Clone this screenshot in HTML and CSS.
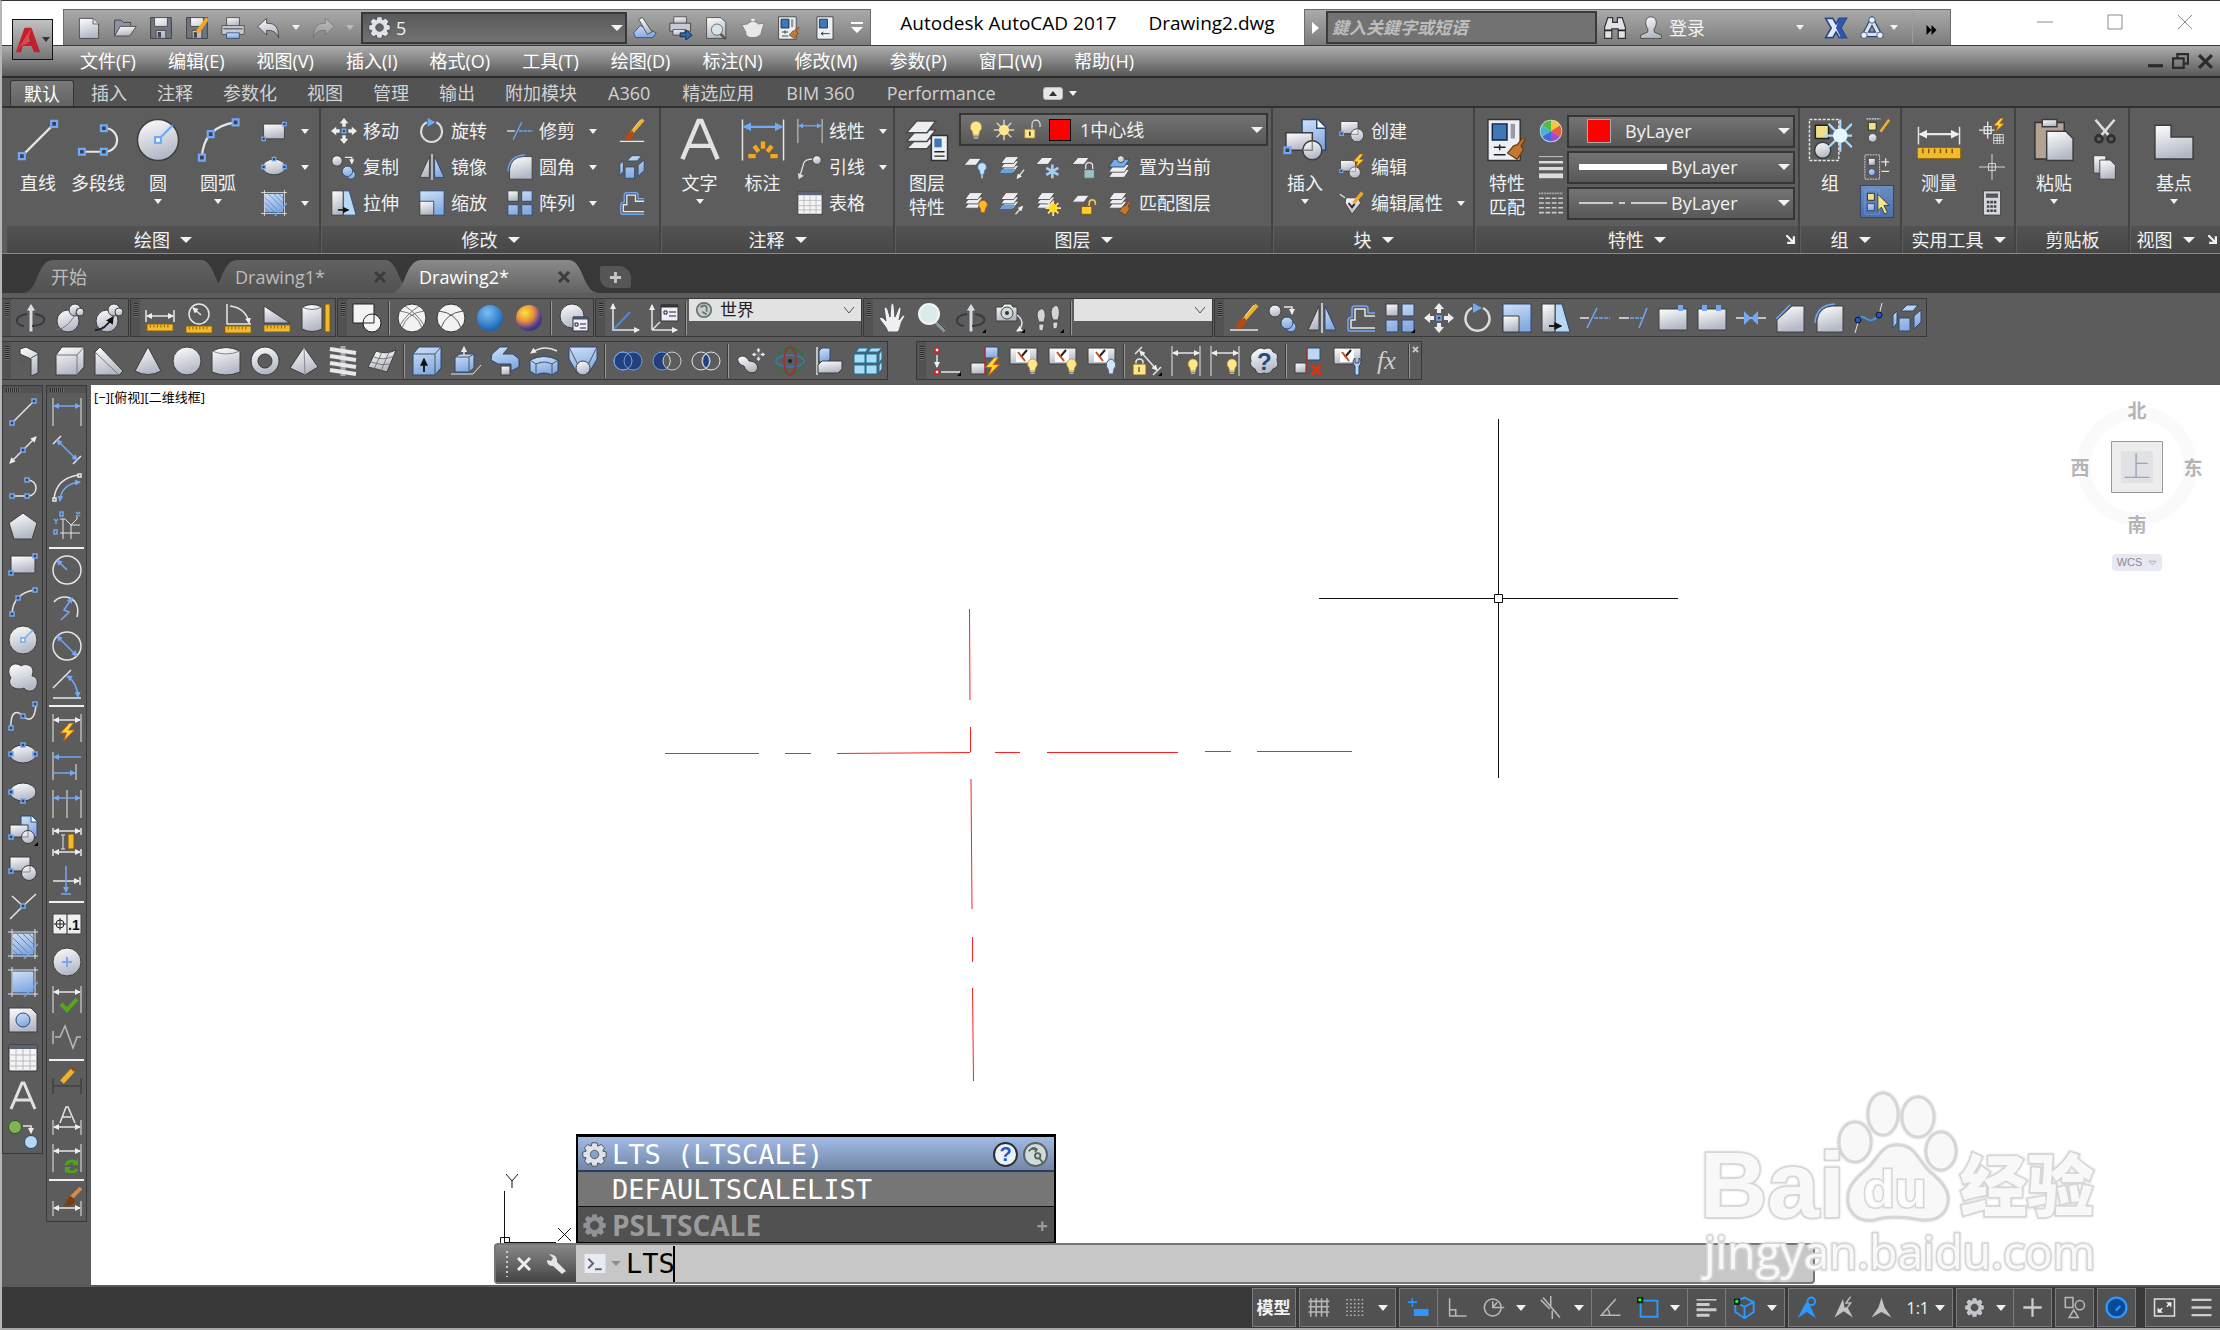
FILE: index.html
```html
<!DOCTYPE html>
<html lang="zh-CN">
<head>
  <title>Autodesk AutoCAD 2017 - Drawing2.dwg</title>
  <meta charset="UTF-8" />
  <meta name="viewport" content="width=device-width" />
  <link rel="stylesheet" href="styles.css">
</head>
<body>
  <svg class="sprite" width="0" height="0" aria-hidden="true">
    <defs>
      <linearGradient id="gw" x1="0" y1="0" x2="0.3" y2="1"><stop offset="0" stop-color="#fff"/><stop offset="1" stop-color="#b4b9c6"/></linearGradient>
      <linearGradient id="gb" x1="0" y1="0" x2="0.3" y2="1"><stop offset="0" stop-color="#cfe2f9"/><stop offset="1" stop-color="#86abe0"/></linearGradient>
      <radialGradient id="gblue" cx="0.4" cy="0.3" r="0.7"><stop offset="0" stop-color="#7cc0f5"/><stop offset="1" stop-color="#1764b4"/></radialGradient>
      <radialGradient id="gwarm" cx="0.35" cy="0.3" r="0.75"><stop offset="0" stop-color="#ffe23a"/><stop offset="0.45" stop-color="#e8913c"/><stop offset="0.8" stop-color="#5a3d93"/><stop offset="1" stop-color="#33307c"/></radialGradient>
      <marker id="aw" viewBox="0 0 6 6" refX="5" refY="3" markerWidth="4" markerHeight="4" orient="auto-start-reverse"><path d="M0 0L6 3L0 6Z" fill="#eee"/></marker>
      <marker id="ab" viewBox="0 0 6 6" refX="5" refY="3" markerWidth="4" markerHeight="4" orient="auto-start-reverse"><path d="M0 0L6 3L0 6Z" fill="#72a8f5"/></marker>
      <marker id="ak" viewBox="0 0 6 6" refX="5" refY="3" markerWidth="4" markerHeight="4" orient="auto-start-reverse"><path d="M0 0L6 3L0 6Z" fill="#111"/></marker>
    </defs>

    <!-- shared parts -->
    <symbol id="bulb" viewBox="0 0 30 30"><path d="M15 3a8 8 0 0 1 5 14l-1 5h-8l-1-5a8 8 0 0 1 5-14z" fill="#ffe88c" stroke="#a98a2c"/><path d="M11 23h8M12 26h6" stroke="#bbb" stroke-width="2"/></symbol>
    <symbol id="sun" viewBox="0 0 30 30"><path d="M15 1v28M1 15h28M5 5l20 20M25 5L5 25" stroke="#d8d2b8" stroke-width="2"/><circle cx="15" cy="15" r="7" fill="#ffe68a"/></symbol>
    <symbol id="lock-open" viewBox="0 0 30 30"><path d="M15 14V7a5 5 0 0 1 11 0v4" class="w"/><path d="M5 14h14v12H5z" fill="#ffe68a" stroke="#927a2a"/><path d="M12 17v6" class="k"/></symbol>
    <symbol id="ruler" viewBox="0 0 30 8"><path d="M0 0h30v8H0z" fill="#f3bb2c" stroke="#7c5508"/><path d="M4 1v3M8 1v3M12 1v3M16 1v3M20 1v3M24 1v3" stroke="#7c5508"/></symbol>
    <symbol id="bolt" viewBox="0 0 14 18"><path d="M9 0L0 10h6l-3 8 11-11H8l5-7z" fill="#ffd23a" stroke="#c35f0b"/></symbol>
    <symbol id="sheets" viewBox="0 0 24 24"><path d="M8 13h15l-6 8H2z" class="lay"/><path d="M8 8h15l-6 8H2z" class="lay"/><path d="M8 3h15l-6 8H2z" class="lay"/></symbol>
    <symbol id="brushlet" viewBox="0 0 16 18"><path d="M15 0l-4 6 2 3-5 8-8-5 5-6 3-1 4-5z" fill="#c27832" stroke="#6b3d12"/></symbol>
    <symbol id="cons" viewBox="0 0 30 30"><rect x="1" y="2" width="27" height="16" rx="1" class="fw"/><path d="M7 4h14v12H7z" fill="#fff"/><path d="M18 4l-6 7" class="k"/><path d="M9 6l7 9" stroke="#c84a1b" stroke-width="2"/></symbol>

    <!-- draw -->
    <symbol id="line" viewBox="0 0 30 30"><path d="M4 26L26 4" class="w"/><path d="M2 24h4v4H2zM24 2h4v4h-4z" class="n"/></symbol>
    <symbol id="xline" viewBox="0 0 30 30"><path d="M2 28L28 2" class="w aa"/><path d="M13 13h4v4h-4z" class="n"/></symbol>
    <symbol id="pline" viewBox="0 0 30 30"><path d="M4 23h16a8 8 0 0 0 0-16h-1" class="w"/><path d="M2 21h4v4H2zM17 21h4v4h-4zM17 5h4v4h-4z" class="n"/></symbol>
    <symbol id="polygon" viewBox="0 0 30 30"><path d="M15 2l14 10-5 16H6L1 12z" class="fw"/></symbol>
    <symbol id="rect" viewBox="0 0 30 30"><path d="M3 7h24v17H3z" class="fw"/><path d="M1 22h4v4H1zM25 5h4v4h-4z" class="n"/></symbol>
    <symbol id="arc" viewBox="0 0 30 30"><path d="M4 27Q5 6 27 3" class="w"/><path d="M2 25h4v4H2zM8 9h4v4H8zM25 1h4v4h-4z" class="n"/></symbol>
    <symbol id="circle" viewBox="0 0 30 30"><circle cx="15" cy="15" r="14" class="fw"/><path d="M15 15L25 5" class="b"/><path d="M13 13h4v4h-4z" class="n nw"/></symbol>
    <symbol id="cloud" viewBox="0 0 30 30"><path d="M13 3c4-3 12-1 12 5 0 3-1 4-1 5 5 0 6 6 5 9-2 8-11 7-13 3-4 2-12 1-14-4-1-3 0-5 1-6C-1 9 1 4 4 2c3-2 7-1 9 1z" class="fw"/></symbol>
    <symbol id="spline" viewBox="0 0 30 30"><path d="M3 27C2 8 10 10 15 15s12 6 13-12" class="w"/><path d="M1 25h4v4H1zM13 13h4v4h-4zM25 1h4v4h-4z" class="n"/></symbol>
    <symbol id="ellipse" viewBox="0 0 30 30"><ellipse cx="15" cy="15" rx="13" ry="9" class="fw"/><path d="M1 13h4v4H1zM25 13h4v4h-4zM13 4h4v4h-4z" class="n"/></symbol>
    <symbol id="ellarc" viewBox="0 0 30 30"><ellipse cx="15" cy="15" rx="13" ry="9" class="fw"/><path d="M1 13h4v4H1zM13 22h4v4h-4z" class="n"/></symbol>
    <symbol id="insert" viewBox="0 0 30 30"><path d="M13 1h11l5 5v16H13z" class="fb"/><path d="M23 1v6h6" fill="#fff" stroke="#2c4770"/><path d="M2 10h18v12H2z" class="fw"/><circle cx="20" cy="22" r="6.5" class="fw"/><path d="M20 16v6h-6" fill="none" stroke="#888"/><path d="M1 20h4v4H1z" class="n"/></symbol>
    <symbol id="block" viewBox="0 0 30 30"><path d="M2 4h20v14H2z" class="fw"/><circle cx="21" cy="20" r="7.5" class="fw"/><path d="M22 13v6h-8" fill="none" stroke="#888"/><path d="M1 16h4v4H1z" class="n"/></symbol>
    <symbol id="point" viewBox="0 0 30 30"><path d="M4 5l11 10L28 3M15 15L2 28" class="w"/><path d="M13 13h4v4h-4z" class="n"/></symbol>
    <symbol id="hatch" viewBox="0 0 30 30"><path d="M4 4h22v22H4z" class="fb"/><path d="M4 8l18 18M4 14l12 12M4 20l6 6M8 4l18 18M14 4l12 12M20 4l6 6" stroke="#5f86c4"/><path d="M0 3h30M0 27h30M4 0v30M27 0v30" class="w thin"/><path d="M16 30L30 15" class="b"/></symbol>
    <symbol id="gradient" viewBox="0 0 30 30"><path d="M4 4h22v22H4z" class="fb"/><path d="M0 3h30M0 27h30M4 0v30M27 0v30" class="w thin"/><path d="M16 30L30 15" class="b"/></symbol>
    <symbol id="region" viewBox="0 0 30 30"><path d="M1 3h22l6 6v18H1z" class="fw"/><circle cx="15" cy="15" r="7" class="fb"/></symbol>
    <symbol id="table" viewBox="0 0 30 30"><path d="M1 2h28v26H1z" fill="#f4f4f4" stroke="#333"/><path d="M1 2h28v4H1z" fill="#5c6370"/><path d="M8 6v22M15 6v22M22 6v22M1 12h28M1 18h28M1 23h28" stroke="#b5b8c0"/></symbol>
    <symbol id="text" viewBox="0 0 30 30"><path d="M3 28L14 2h2l11 26M7 19h16" fill="none" stroke="#e2e2e2" stroke-width="3"/></symbol>
    <symbol id="addsel" viewBox="0 0 30 30"><circle cx="7" cy="8" r="6.5" fill="#7fb356" stroke="#2e5a17"/><path d="M15 7h8v7" class="w ae"/><circle cx="23" cy="23" r="6.5" fill="#b5d8f5" stroke="#2c4770"/></symbol>

    <!-- dimensions -->
    <symbol id="dimlin" viewBox="0 0 30 30"><path d="M1 1v28M29 1v28" class="w thin"/><path d="M2 9h26" class="b ba"/></symbol>
    <symbol id="dimali" viewBox="0 0 30 30"><path d="M1 9L9 1M21 29l8-8" class="w"/><path d="M5 5l20 20" class="b ba"/></symbol>
    <symbol id="dimarc" viewBox="0 0 30 30"><path d="M2 26Q4 5 27 2" class="w"/><path d="M8 28Q9 11 28 9" class="b ba"/><path d="M1 25h3v3H1zM26 1h3v3h-3z" class="w"/></symbol>
    <symbol id="dimord" viewBox="0 0 30 30"><path d="M8 8h5l6 6h9M11 8v20M8 22h20M19 14v14M19 14l6-6V5" class="w thin"/><path d="M8 1h3v4H8zM24 1l4 4M28 1l-4 4M2 8l2 2 2-2M4 10v3M2 19h3v4H2z" class="b"/></symbol>
    <symbol id="dimrad" viewBox="0 0 30 30"><circle cx="15" cy="15" r="14" class="w"/><path d="M15 15L5 5" class="b be"/></symbol>
    <symbol id="dimjog" viewBox="0 0 30 30"><path d="M2 9C10-1 30 4 25 24" class="w"/><path d="M9 27l8-8-5-2 8-12" class="b be"/></symbol>
    <symbol id="dimdia" viewBox="0 0 30 30"><circle cx="15" cy="15" r="14" class="w"/><path d="M5 5l20 20" class="b ba"/></symbol>
    <symbol id="dimang" viewBox="0 0 30 30"><path d="M1 19L19 1M1 29h28" class="w"/><path d="M15 7q10 6 11 21" class="b ba"/></symbol>
    <symbol id="qdim" viewBox="0 0 30 30"><path d="M1 1v28M29 1v28" class="w thin"/><path d="M2 7h26" class="w aa"/><use href="#bolt" x="8" y="10" width="15" height="18"/></symbol>
    <symbol id="dimbase" viewBox="0 0 30 30"><path d="M1 1v28M24 13v16" class="w thin"/><path d="M2 6h27M2 22h21" class="b ba"/></symbol>
    <symbol id="dimcont" viewBox="0 0 30 30"><path d="M1 1v28M15 1v28M29 1v28" class="w thin"/><path d="M2 9h12M16 9h12" class="b ba"/></symbol>
    <symbol id="dimspace" viewBox="0 0 30 30"><path d="M1 1v7M29 1v7M1 22v7M29 22v7" class="w"/><path d="M2 4h26" class="w aa"/><path d="M2 25h26" class="w aa"/><path d="M11 8v14M9 8h4M9 22h4" class="w thin"/><path d="M16 7h6v15h-6z" fill="#f3bb2c" stroke="#7c5508"/></symbol>
    <symbol id="dimbreak" viewBox="0 0 30 30"><path d="M1 16h26" class="w ae"/><path d="M28 12v8" class="w"/><path d="M14 1v26" class="b be"/><path d="M9 29h10" class="b"/></symbol>
    <symbol id="center" viewBox="0 0 30 30"><circle cx="15" cy="15" r="14" class="fw"/><path d="M15 10v10M10 15h10" stroke="#72a8f5" stroke-width="2"/></symbol>
    <symbol id="inspect" viewBox="0 0 30 30"><path d="M1 1v27M29 1v27" class="w thin"/><path d="M2 7h26" class="w aa"/><path d="M9 19l6 6L25 14" fill="none" stroke="#55a814" stroke-width="4"/></symbol>
    <symbol id="jogline" viewBox="0 0 30 30"><path d="M1 8v13M3 14h5L13 3l8 22 4-11h4" fill="none" stroke="#b8b8b8" stroke-width="1.5"/></symbol>
    <symbol id="dimedit" viewBox="0 0 30 30"><path d="M1 11v16M29 11v16M2 19h26" fill="none" stroke="#333"/><path d="M10 15L21 3" stroke="#f1b12a" stroke-width="5"/><path d="M20 3l3-3" stroke="#8b4a18" stroke-width="5"/></symbol>
    <symbol id="dimtedit" viewBox="0 0 30 30"><path d="M8 18L14 2h2l7 16M11 12h8" class="w"/><path d="M1 15v15M29 15v15" class="w thin"/><path d="M2 22h26" class="w aa"/></symbol>
    <symbol id="dimupd" viewBox="0 0 30 30"><path d="M1 1v28M29 1v28" class="w thin"/><path d="M2 8h26" class="w aa"/><path d="M14 22a6 6 0 0 1 10-2M25 26a6 6 0 0 1-10 1" fill="none" stroke="#4fa61a" stroke-width="3"/><path d="M26 16v6h-6zM13 30v-6h6z" fill="#4fa61a"/></symbol>
    <symbol id="dimstyle" viewBox="0 0 30 30"><path d="M1 14v15M29 14v15" class="w thin"/><path d="M2 21h26" class="w aa"/><path d="M29 1L19 11" stroke="#d08a4a" stroke-width="4"/><path d="M19 9l4 4c-1 6-6 7-12 6 4-2 3-8 8-10z" fill="#7a3d12"/></symbol>

    <!-- modify -->
    <symbol id="erase" viewBox="0 0 30 30"><path d="M1 27h28" class="w"/><path d="M28 2L14 18" stroke="#f1b12a" stroke-width="4"/><path d="M25 2l-9 11" stroke="#fff2b0"/><path d="M16 15c4 6-2 11-10 11 3-3 2-10 10-11z" fill="#b54a12"/></symbol>
    <symbol id="copy" viewBox="0 0 30 30"><circle cx="7" cy="8" r="6" class="fw"/><path d="M16 4h8v7" class="w ae"/><circle cx="23" cy="24" r="5" class="fb"/><circle cx="19" cy="20" r="6" class="fb"/></symbol>
    <symbol id="mirror" viewBox="0 0 30 30"><path d="M12 3v24H1z" class="fw"/><path d="M18 3v24h11z" class="fb"/><path d="M15 0v30" class="w"/></symbol>
    <symbol id="offset" viewBox="0 0 30 30"><path d="M29 28H4q-2 0-2-3V17q0-2 3-3h1V6q0-3 3-3h10q3 0 3 3v4h7" class="b"/><path d="M29 25H5v-8h4V6h10v7h10" class="w"/></symbol>
    <symbol id="array" viewBox="0 0 30 30"><path d="M1 1h12v12H1z" class="fw"/><path d="M17 1h12v12H17zM1 17h12v12H1zM17 17h12v12H17z" class="fb"/></symbol>
    <symbol id="move" viewBox="0 0 30 30"><path d="M15 0l5 6h-3v4h-4V6h-3zM15 30l5-6h-3v-4h-4v4h-3zM0 15l6-5v3h4v4H6v3zM30 15l-6-5v3h-4v4h4v3z" fill="#eee"/><path d="M13 13h4v4h-4z" class="n"/></symbol>
    <symbol id="rotate" viewBox="0 0 30 30"><path d="M20 5a12 12 0 1 1-11 0" fill="none" stroke="#dcdcdc" stroke-width="2.5"/><path d="M10 0l9 5-9 5z" fill="#72a8f5"/></symbol>
    <symbol id="scale" viewBox="0 0 30 30"><path d="M1 1h28v28H1z" class="fb"/><path d="M1 13h16v16H1z" class="fw"/></symbol>
    <symbol id="stretch" viewBox="0 0 30 30"><path d="M14 1h7l8 28H14z" fill="#b8d8f4" stroke="#2c4770"/><path d="M1 1h13v28H1z" class="fw"/><path d="M8 23h12" class="k ke"/></symbol>
    <symbol id="trim" viewBox="0 0 30 30"><path d="M0 15h9" class="w"/><path d="M7 25L17 5" class="b"/><path d="M14 15h16" class="b dash"/></symbol>
    <symbol id="extend" viewBox="0 0 30 30"><path d="M0 15h10" class="w"/><path d="M20 25L28 5" class="b"/><path d="M11 15h12" class="b dash"/></symbol>
    <symbol id="breakpt" viewBox="0 0 30 30"><path d="M1 6h28v21H1z" class="fw"/><path d="M20 2h5v6h-5z" fill="#72a8f5"/></symbol>
    <symbol id="break" viewBox="0 0 30 30"><path d="M1 6h28v21H1z" class="fw"/><path d="M5 2h5v6H5zM19 2h5v6h-5z" fill="#72a8f5"/></symbol>
    <symbol id="join" viewBox="0 0 30 30"><path d="M0 15h30" class="w"/><path d="M8 8l7 7 7-7v14l-7-7-7 7z" fill="#72a8f5"/></symbol>
    <symbol id="chamfer" viewBox="0 0 30 30"><path d="M2 29V17L17 3h12v26z" class="fw"/><path d="M1 16L15 2" class="b"/></symbol>
    <symbol id="fillet" viewBox="0 0 30 30"><path d="M3 29V17Q5 4 18 3h11v26z" class="fw"/><path d="M1 20Q2 2 21 1" class="b"/></symbol>
    <symbol id="blend" viewBox="0 0 30 30"><path d="M2 30l4-14M26 12l3-12" class="w thin"/><path d="M5 17c6-8 9 3 14 0 4-1 5-3 7-5" fill="none" stroke="#4496d8" stroke-width="2"/><circle cx="5" cy="17" r="3" fill="#1f55c4" stroke="#112"/><circle cx="26" cy="12" r="3" fill="#1f55c4" stroke="#112"/></symbol>
    <symbol id="explode" viewBox="0 0 30 30"><path d="M7 15h11v13H7zM9 8l6-6h11l-5 6zM22 13l7-6v12l-7 7zM1 12l4-4v12l-4 5z" class="fb"/></symbol>

    <!-- inquiry and visual styles -->
    <symbol id="orbit" viewBox="0 0 30 30"><path d="M15 0l5 8h-3v21h-4V8h-3z" fill="#d7dae2" stroke="#555"/><path d="M19 11c14 2 12 11-3 12M11 11c-14 2-12 11-3 12" fill="none" stroke="#343a44" stroke-width="2"/></symbol>
    <symbol id="blob" viewBox="0 0 30 30"><circle cx="13" cy="18" r="11" class="fw"/><circle cx="20" cy="7" r="6" class="fw"/><circle cx="25" cy="9" r="4" class="fw"/><path d="M1 27Q14 26 23 6" fill="none" stroke="#777"/></symbol>
    <symbol id="blob2" viewBox="0 0 30 30"><circle cx="13" cy="18" r="11" class="fw"/><circle cx="20" cy="7" r="6" class="fw"/><circle cx="25" cy="9" r="4" class="fw"/><path d="M1 27Q10 28 19 14" class="k ke"/></symbol>
    <symbol id="distance" viewBox="0 0 30 30"><path d="M1 7v12M29 7v12" class="w"/><path d="M2 13h26" class="w aa"/><use href="#ruler" y="21" width="30" height="7"/></symbol>
    <symbol id="radius" viewBox="0 0 30 30"><circle cx="15" cy="11" r="10" class="w"/><path d="M17 12L9 5" class="w ae"/><use href="#ruler" y="23" width="30" height="7"/></symbol>
    <symbol id="angle" viewBox="0 0 30 30"><path d="M4 1v20h24M7 3q16 2 19 17" class="w ae"/><use href="#ruler" y="23" width="30" height="7"/></symbol>
    <symbol id="area" viewBox="0 0 30 30"><path d="M2 3v17h26z" class="fw"/><use href="#ruler" y="22" width="30" height="7"/></symbol>
    <symbol id="volume" viewBox="0 0 30 30"><path d="M1 4q10-5 20 0v22q-10 5-20 0z" class="fw"/><path d="M1 4q10 5 20 0" fill="none" stroke="#777"/><path d="M24 1h5v28h-5z" fill="#f3bb2c" stroke="#7c5508"/></symbol>
    <symbol id="vs2d" viewBox="0 0 30 30"><path d="M1 1h21v19H1z" fill="#f4f4f4" stroke="#222"/><circle cx="20" cy="20" r="9" fill="#f4f4f4" stroke="#222"/><path d="M22 12v8H11" fill="none" stroke="#222"/></symbol>
    <symbol id="vswire" viewBox="0 0 30 30"><circle cx="15" cy="15" r="14" fill="#f2f2f2" stroke="#333"/><path d="M3 8Q20 10 25 25M27 8Q10 10 5 25M8 3q12 8 19 19M22 3Q10 11 3 22" fill="none" stroke="#777"/></symbol>
    <symbol id="vshide" viewBox="0 0 30 30"><circle cx="15" cy="15" r="14" fill="#f2f2f2" stroke="#333"/><path d="M3 8Q20 10 25 25M27 8Q10 10 5 25" fill="none" stroke="#555"/></symbol>
    <symbol id="vsreal" viewBox="0 0 30 30"><circle cx="15" cy="15" r="13" fill="url(#gblue)"/></symbol>
    <symbol id="vsconc" viewBox="0 0 30 30"><circle cx="15" cy="15" r="13" fill="url(#gwarm)"/></symbol>
    <symbol id="vsman" viewBox="0 0 30 30"><circle cx="13" cy="13" r="12" class="fw"/><path d="M14 14h15v14H14z" fill="#eef" stroke="#333"/><path d="M14 15h15" stroke="#456" stroke-width="3"/><path d="M16 20h3v3h-3zM21 21h6M21 25h6" class="k thin"/></symbol>
    <symbol id="ucs" viewBox="0 0 30 30"><path d="M3 1v26h26" class="w aa"/><path d="M4 26L20 9" stroke="#4f8ad8" stroke-width="2"/></symbol>
    <symbol id="ucsman" viewBox="0 0 30 30"><path d="M3 27V2" class="w ae"/><path d="M3 27h25" class="w ae"/><path d="M3 27l8-8" class="w"/><path d="M12 2h17v16H12z" fill="#eef" stroke="#333"/><path d="M12 3h17" stroke="#333" stroke-width="3"/><path d="M15 8h3v3h-3zM20 9h7M20 13h7" class="k thin"/></symbol>
    <symbol id="pan" viewBox="0 0 30 30"><path d="M10 29c-2-6-6-9-9-14 3-2 5 1 7 3L6 5c2-2 3 0 4 2l2 7 1-13c2-1 3 0 3 2l1 11 4-10c2 0 2 1 2 3l-2 10 4-5c2 0 2 1 1 3-4 5-3 9-6 14z" fill="#eef0f4" stroke="#555"/></symbol>
    <symbol id="zoom" viewBox="0 0 30 30"><path d="M18 18l10 10" stroke="#8d939e" stroke-width="4"/><path d="M20 18l9 9" stroke="#333"/><circle cx="12" cy="11" r="10" fill="#dcebea" stroke="#f4f4f4" stroke-width="2"/></symbol>
    <symbol id="camera" viewBox="0 0 30 30"><path d="M1 4h6l2-3h7l2 3h4v14H1z" class="fw"/><circle cx="12" cy="10" r="6" fill="#cfd9d8" stroke="#444"/><circle cx="12" cy="10" r="2" fill="#333"/><path d="M22 12c8 6 5 13 0 16" class="w ae"/></symbol>
    <symbol id="walk" viewBox="0 0 30 30"><path d="M5 7c5-4 7 3 6 8l-1 4H5C3 14 2 10 5 7zM5 21h5q0 7-3 7t-2-7zM19 4c6-5 7 4 6 9l-1 4h-5c-2-5-3-9 0-13zM19 19h5q0 7-3 7t-2-7z" fill="#d5d5d5" stroke="#4a4a4a"/></symbol>

    <!-- solids -->
    <symbol id="polysolid" viewBox="0 0 30 30"><path d="M4 3l6-2 12 6v20l-7 3V13L4 8z" class="fw"/><path d="M15 12l7-4M4 8v8l4 3V10" fill="none" stroke="#555"/></symbol>
    <symbol id="box" viewBox="0 0 30 30"><path d="M1 9l6-8h22v20l-7 8H1z" class="fw"/><path d="M1 9h21v20M22 9l7-8" fill="none" stroke="#777"/></symbol>
    <symbol id="wedge" viewBox="0 0 30 30"><path d="M1 29V6l5-5 23 24-4 4z" class="fw"/><path d="M1 6l24 23" fill="none" stroke="#777"/></symbol>
    <symbol id="cone" viewBox="0 0 30 30"><path d="M15 1l13 24q-13 7-26 0z" class="fw"/></symbol>
    <symbol id="sphere" viewBox="0 0 30 30"><circle cx="15" cy="15" r="14" class="fw"/></symbol>
    <symbol id="cylinder" viewBox="0 0 30 30"><path d="M1 5q14-7 28 0v21q-14 6-28 0z" class="fw"/><path d="M1 5q14 6 28 0" fill="none" stroke="#888"/></symbol>
    <symbol id="torus" viewBox="0 0 30 30"><path d="M15 1a14 14 0 1 0 .1 0zM15 8a7 7 0 1 1-.1 0z" class="fw" fill-rule="evenodd"/></symbol>
    <symbol id="pyramid" viewBox="0 0 30 30"><path d="M15 1l14 20-13 8L1 22z" class="fw"/><path d="M15 1l1 28" stroke="#888"/></symbol>
    <symbol id="helix" viewBox="0 0 30 30"><path d="M15 0v30" stroke="#aaa" stroke-width="5"/><path d="M2 3l26 4M2 10l26 4M2 17l26 4M2 24l26 4" stroke="#e8e8ee" stroke-width="4"/></symbol>
    <symbol id="mesh" viewBox="0 0 30 30"><path d="M9 5q10 4 20-1L20 26Q10 23 1 21z" class="fw"/><path d="M7 11q9 4 20-1M4 16q10 4 20 2M15 6L7 23M22 6l-8 19" fill="none" stroke="#777"/></symbol>
    <symbol id="presspull" viewBox="0 0 30 30"><path d="M1 8l6-7h22v21l-6 7H1z" class="fb"/><path d="M1 8h22v21M23 8l6-7" fill="none" stroke="#456"/><path d="M12 26V13" class="k ke"/></symbol>
    <symbol id="extrude" viewBox="0 0 30 30"><path d="M4 11l5-3h14v14l-5 4H4z" class="fb"/><path d="M4 11h14v15M18 11l5-3" fill="none" stroke="#456"/><path d="M13 9V1" class="w ae"/><path d="M0 28h22l8-9" class="w thin"/></symbol>
    <symbol id="sweep" viewBox="0 0 30 30"><path d="M2 8l8-7h9l-6 7h10l6 5v8l-8 4v-7H8l-7-4z" class="fb"/><path d="M11 20h9v9h-9z" class="fw"/></symbol>
    <symbol id="revolve" viewBox="0 0 30 30"><path d="M1 14q14-7 28 0v11l-6 4q-8-4-16 0l-6-4z" class="fb"/><path d="M1 14l6 4q8-4 16 0l6-4M7 18v10M23 18v10" fill="none" stroke="#456"/><path d="M2 7Q15-2 28 5" class="w ba2"/></symbol>
    <symbol id="loft" viewBox="0 0 30 30"><path d="M1 1h28v12l-8 14H9L1 13z" class="fb"/><path d="M1 1l9 18M29 1l-9 18" stroke="#456"/><circle cx="15" cy="22" r="7" class="fw"/></symbol>
    <symbol id="union" viewBox="0 0 30 30"><circle cx="10" cy="15" r="9" class="set"/><circle cx="20" cy="15" r="9" class="set"/><circle cx="10" cy="15" r="9" class="b thin"/></symbol>
    <symbol id="subtract" viewBox="0 0 30 30"><circle cx="10" cy="15" r="9" class="set"/><circle cx="20" cy="15" r="9" fill="#5d5d5d" stroke="#ccc"/><path d="M15 8a9 9 0 0 1 0 14" class="w thin"/></symbol>
    <symbol id="intersect" viewBox="0 0 30 30"><path d="M15 8a9 9 0 0 1 0 14 9 9 0 0 1 0-14z" class="set"/><circle cx="10" cy="15" r="9" class="w thin"/><circle cx="20" cy="15" r="9" class="w thin"/></symbol>
    <symbol id="mouse" viewBox="0 0 30 30"><path d="M2 12c5-4 9-1 11 3 6 0 10 4 8 9-3 5-11 3-13-4-4-1-7-4-6-8z" class="fw"/><use href="#move" x="16" y="2" width="13" height="13"/></symbol>
    <symbol id="gizmo" viewBox="0 0 30 30"><circle cx="15" cy="15" r="13" fill="none" stroke="#277a33" stroke-width="1.5"/><ellipse cx="15" cy="15" rx="14" ry="6" fill="none" stroke="#3b78b8" stroke-width="1.5"/><ellipse cx="15" cy="15" rx="6" ry="14" fill="none" stroke="#a02f2a" stroke-width="1.5"/><circle cx="15" cy="15" r="2" fill="#222"/></symbol>
    <symbol id="align" viewBox="0 0 30 30"><path d="M3 1v28" class="w"/><path d="M5 5l3-3h8v11l-3 3H5z" class="fb"/><path d="M4 19l4-4h20v8l-4 4H4z" class="fw"/></symbol>
    <symbol id="array3d" viewBox="0 0 30 30"><path d="M1 8h11v9H1zM13 8h11v9H13zM1 19h11v9H1zM13 19h11v9H13zM3 6l3-4h9l-2 4zM15 6l3-4h11l-4 4zM26 8l3-4v9l-3 4zM26 19l3-4v8l-3 4z" fill="#a9def5" stroke="#1f6f96"/></symbol>

    <!-- parametric -->
    <symbol id="coincident" viewBox="0 0 30 30"><path d="M4 2h4v4H4zM4 24h4v4H4z" fill="#fff" stroke="#c22" stroke-width="1.5"/><path d="M6 9v12" class="w ae"/><path d="M10 26h19" class="w"/></symbol>
    <symbol id="autocons" viewBox="0 0 30 30"><path d="M15 1h13v11H15z" class="fb"/><path d="M1 17h14v11H1z" class="fw"/><path d="M15 0v30" stroke="#c22"/><use href="#bolt" x="15" y="11" width="15" height="19"/></symbol>
    <symbol id="conshow" viewBox="0 0 30 30"><use href="#cons"/><use href="#bulb" x="14" y="11" width="19" height="19"/></symbol>
    <symbol id="conhide" viewBox="0 0 30 30"><use href="#cons"/><path d="M24 13a6 6 0 0 1 3 10l-1 5h-4l-1-5a6 6 0 0 1 3-10z" fill="#cfe6fb" stroke="#567"/></symbol>
    <symbol id="dimlock" viewBox="0 0 30 30"><path d="M3 8l7-7M21 29l8-8" class="w"/><path d="M8 5l17 19" class="w aa"/><path d="M4 18v-3a4 4 0 0 1 7 0v3" class="w"/><path d="M1 18h13v11H1z" fill="#ffe68a" stroke="#7a6420"/><path d="M7 21v5" class="k thin"/></symbol>
    <symbol id="dimshow" viewBox="0 0 30 30"><path d="M1 0v30M29 0v30" class="w thin"/><path d="M2 7h26" class="w aa"/><use href="#bulb" x="12" y="11" width="20" height="19"/></symbol>
    <symbol id="puff" viewBox="0 0 30 30"><path d="M6 5q5-5 9-2 7-3 9 3 6 1 4 8 3 7-4 9-3 6-9 4-7 3-9-4-6-3-4-8-2-7 4-10z" class="fw"/></symbol>
    <symbol id="condel" viewBox="0 0 30 30"><path d="M13 2h13v12H13z" fill="#b8d8f4" stroke="#2c4770"/><path d="M1 17h11v10H1z" class="fw"/><path d="M13 2v26" stroke="#c22"/><path d="M18 19l9 10M27 19l-9 10" stroke="#e2300e" stroke-width="3"/></symbol>
    <symbol id="conset" viewBox="0 0 30 30"><use href="#cons"/><path d="M22 12v5h4v-5q4 4 0 8v9h-4v-9q-4-4 0-8z" fill="#b9d6f4" stroke="#2c4770"/></symbol>

    <!-- quick access -->
    <symbol id="new" viewBox="0 0 30 30"><path d="M3 3h17l7 7v18H3z" class="fw"/><path d="M20 3v7h7" fill="#ddd" stroke="#555"/></symbol>
    <symbol id="open" viewBox="0 0 30 30"><path d="M2 25V5h8l3 3h9v4" fill="#8c94a0" stroke="#333"/><path d="M2 25l7-12h20l-8 12z" class="fw"/></symbol>
    <symbol id="save" viewBox="0 0 30 30"><path d="M2 2h26v26H2z" fill="#70757f" stroke="#333"/><path d="M7 2h16v11H7zM9 18h12v10H9z" class="fw"/><path d="M11 20h4v7h-4z" fill="#445"/></symbol>
    <symbol id="saveas" viewBox="0 0 30 30"><use href="#save"/><path d="M28 3L15 21" stroke="#f1a52a" stroke-width="5"/></symbol>
    <symbol id="print" viewBox="0 0 30 30"><path d="M7 2h16v11H7z" class="fw"/><path d="M1 12h28v11H1z" fill="#c6cad3" stroke="#444"/><path d="M3 16h24" class="k thin"/><path d="M7 21h16v7H7z" class="fb"/></symbol>
    <symbol id="undo" viewBox="0 0 30 30"><path d="M1 13L12 3v6q16-1 15 18-4-10-15-9v6z" class="fw"/></symbol>
    <symbol id="gear" viewBox="0 0 30 30"><path d="M12 1h6l1 4 4-2 4 4-2 4 4 1v6l-4 1 2 4-4 4-4-2-1 4h-6l-1-4-4 2-4-4 2-4-4-1v-6l4-1-2-4 4-4 4 2zM15 10a5 5 0 1 0 .1 0z" fill="#dfe2e8" stroke="#3a3e46" fill-rule="evenodd"/></symbol>
    <symbol id="plotter" viewBox="0 0 30 30"><path d="M1 21l8-9 20 9-4 6H3z" class="fb"/><path d="M7 4l5-2 12 18-6 3z" class="fw"/></symbol>
    <symbol id="publish" viewBox="0 0 30 30"><path d="M6 1h16v9H6z" class="fw"/><path d="M1 9h26v10H1z" fill="#c6cad3" stroke="#333"/><path d="M5 17h15v7H5z" class="fw"/><path d="M14 21h7v-4l8 7-8 6v-4h-7z" fill="#2e63ad" stroke="#123"/></symbol>
    <symbol id="preview" viewBox="0 0 30 30"><path d="M2 2h18l6 6v20H2z" class="fw"/><path d="M19 22l7 7" stroke="#555" stroke-width="3"/><circle cx="15" cy="17" r="7" fill="#d5e4e8" stroke="#555"/></symbol>
    <symbol id="teapot" viewBox="0 0 30 30"><path d="M8 10q7-7 14 0l7-1-3 9q-1 9-11 9T6 20L1 11z" fill="#e9e9ea" stroke="#777"/><path d="M13 5h4" stroke="#eee" stroke-width="3"/></symbol>
    <symbol id="matchprop" viewBox="0 0 30 30"><path d="M2 1h22v28H2z" fill="#eceff4" stroke="#333"/><path d="M5 4h10v11H5z" fill="#3f78b5" stroke="#124"/><path d="M19 4v10" stroke="#99a" stroke-width="3"/><path d="M6 20h8M6 25h8M10 18v4" class="k thin"/><use href="#brushlet" x="15" y="14" width="14" height="15"/></symbol>
    <symbol id="props" viewBox="0 0 30 30"><path d="M5 1h20v28H5z" fill="#eceff4" stroke="#333"/><path d="M8 4h10v11H8z" fill="#3f78b5" stroke="#124"/><path d="M10 22h11M10 22l3-2M10 22l3 2" class="k thin"/></symbol>
    <symbol id="binoc" viewBox="0 0 30 30"><path d="M6 2h6v6h6V2h6l4 12v14h-9V16h-8v12H2V14z" fill="#dfe2e8" stroke="#333" stroke-width="1.5"/><path d="M2 18h9M19 18h9" class="k"/></symbol>
    <symbol id="user" viewBox="0 0 30 30"><path d="M15 1c8 0 8 10 4 15v4l9 4v4H2v-4l9-4v-4C7 11 7 1 15 1z" class="fw"/></symbol>
    <symbol id="exchange" viewBox="0 0 30 30"><path d="M2 3h9l4 7 4-7h9l-7 12 7 12h-9l-4-7-4 7H2l7-12z" fill="#e3e9f5" stroke="#26458e" stroke-width="2"/><path d="M19 3h9l-7 12 7 12h-7L15 15z" fill="#2f56ab"/></symbol>
    <symbol id="a360" viewBox="0 0 30 30"><path d="M15 6L6 23h18z" fill="none" stroke="#2c4475" stroke-width="7"/><path d="M15 6L6 23h18z" fill="none" stroke="#dbe2ee" stroke-width="4"/><g fill="#e8ecf4" stroke="#2c4475"><circle cx="15" cy="5" r="4"/><circle cx="5" cy="24" r="4"/><circle cx="25" cy="24" r="4"/></g></symbol>

    <!-- ribbon -->
    <symbol id="dimbig" viewBox="0 0 30 30"><path d="M1 1v28M29 1v28" class="w thin"/><path d="M2 6h26" class="b ba"/><path d="M15 16v5M9 19l3 4M21 19l-3 4M5 26h5M20 26h5" stroke="#f6a81c" stroke-width="3"/></symbol>
    <symbol id="leader" viewBox="0 0 30 30"><path d="M3 27L8 10q2-4 10-4" class="w"/><path d="M1 22l1 7 6-4z" fill="#ddd"/><circle cx="23" cy="7" r="5" class="fw"/></symbol>
    <symbol id="layerprop" viewBox="0 0 30 30"><path d="M8 14h13l-6 7H1z" class="lay"/><path d="M8 8h13l-6 8H1z" class="lay"/><path d="M8 2h13l-6 8H1z" class="lay"/><path d="M18 12h11v17H18z" fill="#eceff4" stroke="#333"/><path d="M20 14h5v6h-5z" fill="#3f78b5"/><path d="M20 23h7M20 26h7" class="k thin"/></symbol>
    <symbol id="layoff" viewBox="0 0 30 30"><path d="M8 5h13l-6 8H1z" class="lay"/><path d="M22 10a5 5 0 0 1 3 9l-1 5h-4l-1-5a5 5 0 0 1 3-9z" fill="#bfe0ff" stroke="#4a7ab0"/><path d="M22 24v4" class="w"/></symbol>
    <symbol id="layiso" viewBox="0 0 30 30"><use href="#sheets" width="24" height="24"/><path d="M4 17h15l-4 5H1z" fill="#6b9fe0"/><path d="M29 18l-8 10" class="w ae"/></symbol>
    <symbol id="layfreeze" viewBox="0 0 30 30"><path d="M8 4h13l-6 8H1z" class="lay"/><path d="M20 12v16M13 16l14 8M27 16l-14 8" stroke="#a8cdf7" stroke-width="3"/></symbol>
    <symbol id="laylock" viewBox="0 0 30 30"><path d="M8 4h13l-6 8H1z" class="lay"/><path d="M17 18v-4a4 4 0 0 1 8 0v4" class="w"/><path d="M15 18h12v10H15z" fill="#9fbfc0" stroke="#466"/></symbol>
    <symbol id="laycur" viewBox="0 0 30 30"><path d="M8 18h18l-6 9H2z" class="lay"/><path d="M8 12h18l-6 9H2z" class="lay"/><path d="M8 6h18l-6 9H2z" fill="#79a9ea" stroke="#246"/><circle cx="16" cy="6" r="4" class="fw"/></symbol>
    <symbol id="layon" viewBox="0 0 30 30"><use href="#sheets" width="24" height="24"/><path d="M23 12a5 5 0 0 1 3 9l-1 5h-4l-1-5a5 5 0 0 1 3-9z" fill="#ffb72e" stroke="#a96a12"/></symbol>
    <symbol id="layuniso" viewBox="0 0 30 30"><use href="#sheets" width="24" height="24"/><path d="M4 17h15l-4 5H1z" fill="#6b9fe0"/><path d="M19 28l8-9" class="w ae"/></symbol>
    <symbol id="laythaw" viewBox="0 0 30 30"><use href="#sheets" width="24" height="24"/><path d="M21 12v18M12 21h18M15 15l12 12M27 15L15 27" stroke="#ffe98a" stroke-width="2"/><circle cx="21" cy="21" r="5" fill="#ffda22"/></symbol>
    <symbol id="layunlock" viewBox="0 0 30 30"><path d="M8 6h13l-6 8H1z" class="lay"/><path d="M21 19v-4a3 3 0 0 1 7 0v2" fill="none" stroke="#f0c64a" stroke-width="2"/><path d="M12 19h12v9H12z" fill="#ffcb2e" stroke="#75560e"/></symbol>
    <symbol id="laymatch" viewBox="0 0 30 30"><use href="#sheets" width="24" height="24"/><use href="#brushlet" x="14" y="13" width="15" height="17"/></symbol>
    <symbol id="blockedit" viewBox="0 0 30 30"><use href="#block" y="4" width="26" height="26"/><use href="#bolt" x="16" y="0" width="13" height="16"/></symbol>
    <symbol id="attedit" viewBox="0 0 30 30"><path d="M1 5l6 4" class="w"/><path d="M8 9h14l3 6-10 13L7 15z" class="fw"/><path d="M27 3L17 15" stroke="#f1a52a" stroke-width="4"/><path d="M11 15l4 5 3-4" class="k"/></symbol>
    <symbol id="wheel" viewBox="0 0 30 30"><circle cx="15" cy="15" r="14" fill="#ddd"/><path d="M15 15V2a13 13 0 0 1 11 6z" fill="#f0c83e"/><path d="M15 15l11-7a13 13 0 0 1 0 14z" fill="#e85d35"/><path d="M15 15l11 7a13 13 0 0 1-11 6z" fill="#a14bd0"/><path d="M15 15v13a13 13 0 0 1-11-6z" fill="#4668dd"/><path d="M15 15L4 22a13 13 0 0 1 0-14z" fill="#48b5cf"/><path d="M15 15L4 8a13 13 0 0 1 11-6z" fill="#57b945"/></symbol>
    <symbol id="lweights" viewBox="0 0 30 30"><path d="M0 2h30" stroke="#ddd" stroke-width="1"/><path d="M0 9h30" stroke="#ddd" stroke-width="3"/><path d="M0 17h30" stroke="#ddd" stroke-width="4"/><path d="M0 26h30" stroke="#ddd" stroke-width="6"/></symbol>
    <symbol id="ltypes" viewBox="0 0 30 30"><path d="M0 3h30" stroke="#ccc" stroke-width="2" stroke-dasharray="1 1"/><path d="M0 9h30M0 15h30M0 21h30M0 27h30" stroke="#ccc" stroke-width="2" stroke-dasharray="6 2"/></symbol>
    <symbol id="group" viewBox="0 0 30 30"><path d="M1 1h20v28H1z" class="w thin dots"/><path d="M5 5h9v9H5z" fill="#efe08a" stroke="#222"/><circle cx="10" cy="22" r="5.5" class="fw"/><path d="M22 1v22M11 12h19M14 4l16 16M30 4L14 20" stroke="#a9dcff" stroke-width="1.5"/><circle cx="22" cy="12" r="5" fill="#e6f6ff"/></symbol>
    <symbol id="groupedit" viewBox="0 0 30 30"><path d="M3 1h16" class="w dots"/><path d="M5 5h9v9H5z" fill="#efe08a" stroke="#222"/><circle cx="10" cy="23" r="5" class="fw"/><path d="M29 2L19 16" stroke="#f1b12a" stroke-width="3"/></symbol>
    <symbol id="groupadd" viewBox="0 0 30 30"><path d="M1 1h17v28H1z" class="w thin dots"/><path d="M5 5h8v8H5z" class="fw"/><circle cx="9" cy="21" r="4" class="fb"/><path d="M20 9h9M25 5v9M20 20h9" class="w"/></symbol>
    <symbol id="groupsel" viewBox="0 0 30 30"><path d="M1 1h17v28H1z" class="b thin dots"/><path d="M4 5h8v8H4z" fill="#efe08a" stroke="#222"/><path d="M4 17h8v8H4z" class="fb"/><path d="M16 6v19l4-4 4 8 3-2-4-8h6z" fill="#f4e58c" stroke="#333"/></symbol>
    <symbol id="measure" viewBox="0 0 30 30"><path d="M1 6v12M29 6v12" class="w thin"/><path d="M2 11h26" class="w aa"/><use href="#ruler" y="20" width="30" height="8"/></symbol>
    <symbol id="quickcalc" viewBox="0 0 30 30"><path d="M0 14h18M10 4v20M6 10h8v8H6z" class="w"/><path d="M17 19h11v11H17zM21 19v11M24 19v11M17 23h11M17 26h11" class="w thin"/><use href="#bolt" x="17" y="0" width="12" height="16"/></symbol>
    <symbol id="idpoint" viewBox="0 0 30 30"><path d="M0 15h30M15 0v30M11 11h8v8h-8z" class="w thin"/></symbol>
    <symbol id="calc" viewBox="0 0 30 30"><path d="M5 1h20v28H5z" fill="#d5d8de" stroke="#333"/><path d="M8 4h14v5H8z" fill="#555"/><path d="M9 14h12M9 19h12M9 24h12" stroke="#444" stroke-width="3" stroke-dasharray="3 1"/></symbol>
    <symbol id="paste" viewBox="0 0 30 30"><path d="M2 3h20v25H2z" fill="#b3a394" stroke="#333"/><path d="M7 1h10v5H7z" class="fw"/><path d="M10 9h13l5 5v15H10z" class="fw"/></symbol>
    <symbol id="cut" viewBox="0 0 30 30"><path d="M4 2l16 19M26 2L10 21" stroke="#ddd" stroke-width="3"/><circle cx="8" cy="24" r="4" fill="none" stroke="#2f2f2f" stroke-width="3"/><circle cx="22" cy="24" r="4" fill="none" stroke="#2f2f2f" stroke-width="3"/></symbol>
    <symbol id="copyclip" viewBox="0 0 30 30"><path d="M2 2h14v20H2z" class="fw"/><path d="M9 7h12l6 6v16H9z" class="fw"/></symbol>
    <symbol id="base" viewBox="0 0 30 30"><path d="M2 5h11v8h15v15H2z" class="fw"/></symbol>

    <!-- status bar -->
    <symbol id="s-grid" viewBox="0 0 30 30"><path d="M5 3v24M12 3v24M19 3v24M26 3v24M2 7h27M2 14h27M2 21h27" class="s"/></symbol>
    <symbol id="s-snap" viewBox="0 0 30 30"><path d="M3 5h25M3 10h25M3 15h25M3 20h25M3 25h25" class="s" stroke-dasharray="2 3"/></symbol>
    <symbol id="s-dyn" viewBox="0 0 30 30"><path d="M7 3v11M1 8h12" stroke="#2c98ff" stroke-width="2"/><path d="M9 17h19v9H9z" fill="#2c98ff"/></symbol>
    <symbol id="s-ortho" viewBox="0 0 30 30"><path d="M6 3v23h22M6 18h8v8" class="s"/></symbol>
    <symbol id="s-polar" viewBox="0 0 30 30"><circle cx="14" cy="15" r="11" class="s"/><path d="M29 15H14V7M14 15l6-7" class="s"/></symbol>
    <symbol id="s-iso" viewBox="0 0 30 30"><path d="M4 2l22 26M14 0v14M1 5l12 12M16 19v11" class="s"/></symbol>
    <symbol id="s-track" viewBox="0 0 30 30"><path d="M28 25H3L22 4M14 25q0-5-3-8" class="s"/></symbol>
    <symbol id="s-snapobj" viewBox="0 0 30 30"><path d="M6 6h22v21H6z" fill="none" stroke="#2c98ff" stroke-width="2.5"/><path d="M2 2h7v7H2z" fill="#0a3a0a" stroke="#111"/><circle cx="5" cy="5" r="2" fill="#2cff2c"/></symbol>
    <symbol id="s-lw" viewBox="0 0 30 30"><path d="M2 5h26" stroke="#ccc" stroke-width="2"/><path d="M2 11h17M2 18h26M2 25h17" stroke="#ccc" stroke-width="4"/></symbol>
    <symbol id="s-cube" viewBox="0 0 30 30"><path d="M15 2l12 6v13l-12 8-12-8V8zM3 8l12 6 12-6M15 14v15" fill="none" stroke="#2c98ff" stroke-width="2.5"/><path d="M2 4h7v7H2z" fill="#0a3a0a" stroke="#111"/><circle cx="5" cy="7" r="2" fill="#2cff2c"/></symbol>
    <symbol id="s-ann1" viewBox="0 0 30 30"><path d="M13 8L2 29l12-8 12 8-7-15z" fill="#2c98ff"/><circle cx="20" cy="7" r="5" fill="none" stroke="#2c98ff" stroke-width="2.5"/></symbol>
    <symbol id="s-ann2" viewBox="0 0 30 30"><path d="M13 4L2 28l12-8 12 8-7-13h-4z" fill="#c4c4c4"/><path d="M23 1l-6 8h6l-5 7" class="s"/></symbol>
    <symbol id="s-ann3" viewBox="0 0 30 30"><path d="M15 2l-4 13L2 28l13-7 13 7-9-13z" fill="#c4c4c4"/></symbol>
    <symbol id="s-plus" viewBox="0 0 30 30"><path d="M15 3v24M3 15h24" stroke="#ccc" stroke-width="3"/></symbol>
    <symbol id="s-shapes" viewBox="0 0 30 30"><path d="M3 2h10v13H3zM14 18l6 10H8z" class="s"/><circle cx="22" cy="12" r="6" class="s"/></symbol>
    <symbol id="s-perf" viewBox="0 0 30 30"><circle cx="15" cy="15" r="13" fill="#0a4a94" stroke="#2c98ff" stroke-width="3"/><path d="M14 19l6-6" stroke="#2c98ff" stroke-width="3"/></symbol>
    <symbol id="s-full" viewBox="0 0 30 30"><path d="M2 4h26v22H2z" fill="none" stroke="#ddd" stroke-width="2"/><path d="M17 8h7v7zM13 22H6v-7z" fill="#eee"/><path d="M22 10l-4 4M8 20l4-4" stroke="#eee" stroke-width="2"/></symbol>
    <symbol id="s-menu" viewBox="0 0 30 30"><path d="M2 5h26M2 15h26M2 25h26" stroke="#ccc" stroke-width="3"/></symbol>
  </svg>

  <header class="titlebar">
    <button class="app-button" aria-label="Application menu">
      <svg viewBox="0 0 30 30"><path d="M1 29L11 1h8l10 28h-7l-3-7H9l-2 7z" fill="#c2202b"/><path d="M11 17h6l-3-9z" fill="#8f9192"/><path d="M1 29L19 1l-5 18-7 3z" fill="#e0474c"/></svg>
      <i class="caret dark"></i>
    </button>
    <div class="qat">
      <button class="qbtn" aria-label="New"><svg><use href="#new"/></svg></button>
      <button class="qbtn" aria-label="Open"><svg><use href="#open"/></svg></button>
      <button class="qbtn" aria-label="Save"><svg><use href="#save"/></svg></button>
      <button class="qbtn" aria-label="Save as"><svg><use href="#saveas"/></svg></button>
      <button class="qbtn" aria-label="Print"><svg><use href="#print"/></svg></button>
      <button class="qbtn" aria-label="Undo"><svg><use href="#undo"/></svg></button>
      <i class="caret"></i>
      <button class="qbtn redo" aria-label="Redo"><svg><use href="#undo"/></svg></button>
      <i class="caret faded"></i>
      <div class="workspace">
        <svg><use href="#gear"/></svg>
        <select aria-label="Workspace"><option>5</option></select>
        <i class="caret large"></i>
      </div>
      <button class="qbtn" aria-label="Plotter"><svg><use href="#plotter"/></svg></button>
      <button class="qbtn" aria-label="Publish"><svg><use href="#publish"/></svg></button>
      <button class="qbtn" aria-label="Preview"><svg><use href="#preview"/></svg></button>
      <button class="qbtn" aria-label="Render"><svg><use href="#teapot"/></svg></button>
      <button class="qbtn" aria-label="Match properties"><svg><use href="#matchprop"/></svg></button>
      <button class="qbtn" aria-label="Properties"><svg><use href="#props"/></svg></button>
      <button class="more" aria-label="Customize"><svg viewBox="0 0 12 12"><path d="M0 0h12v2H0zM0 5h12l-6 6z"/></svg></button>
    </div>
    <h1 class="title"><span>Autodesk AutoCAD 2017</span><span>Drawing2.dwg</span></h1>
    <div class="infocenter">
      <button class="expand" aria-label="Collapse search"><i class="caret-right"></i></button>
      <input type="text" class="search" aria-label="Search" placeholder="鍵入关鍵字或短语">
      <button class="qbtn" aria-label="Find"><svg><use href="#binoc"/></svg></button>
      <button class="signin"><svg><use href="#user"/></svg>登录<i class="caret"></i></button>
      <button class="qbtn" aria-label="Exchange apps"><svg><use href="#exchange"/></svg></button>
      <button class="qbtn" aria-label="Stay connected"><svg><use href="#a360"/></svg></button>
      <i class="caret"></i>
      <button class="overflow" aria-label="More"><svg viewBox="0 0 10 10"><path d="M0 0l5 5-5 5zM5 0l5 5-5 5z"/></svg></button>
    </div>
    <div class="winctl">
      <button aria-label="Minimize"><svg viewBox="0 0 16 16"><path d="M0 8h16"/></svg></button>
      <button aria-label="Maximize"><svg viewBox="0 0 16 16"><path d="M1 1h14v14H1z"/></svg></button>
      <button aria-label="Close"><svg viewBox="0 0 16 16"><path d="M1 1l14 14M15 1L1 15"/></svg></button>
    </div>
  </header>

  <nav class="menubar">
    <a href="#">文件(F)</a>
    <a href="#">编辑(E)</a>
    <a href="#">视图(V)</a>
    <a href="#">插入(I)</a>
    <a href="#">格式(O)</a>
    <a href="#">工具(T)</a>
    <a href="#">绘图(D)</a>
    <a href="#">标注(N)</a>
    <a href="#">修改(M)</a>
    <a href="#">参数(P)</a>
    <a href="#">窗口(W)</a>
    <a href="#">帮助(H)</a>
    <div class="docctl">
      <button aria-label="Minimize drawing"><svg viewBox="0 0 16 16"><path d="M1 12h14"/></svg></button>
      <button aria-label="Restore drawing"><svg viewBox="0 0 16 16"><path d="M5 5V1h10v9h-4M1 5h10v9H1z"/></svg></button>
      <button aria-label="Close drawing"><svg viewBox="0 0 16 16"><path d="M2 2l12 12M14 2L2 14"/></svg></button>
    </div>
  </nav>

  <nav class="ribbon-tabs">
    <button class="active">默认</button>
    <button>插入</button>
    <button>注释</button>
    <button>参数化</button>
    <button>视图</button>
    <button>管理</button>
    <button>输出</button>
    <button>附加模块</button>
    <button>A360</button>
    <button>精选应用</button>
    <button>BIM 360</button>
    <button>Performance</button>
    <button class="fold" aria-label="Minimize ribbon"><span class="fold-icon"></span><i class="caret"></i></button>
  </nav>

  <div class="ribbon">
    <section class="panel">
      <div class="panel-body draw">
        <button class="big"><svg><use href="#line"/></svg>直线</button>
        <button class="big"><svg><use href="#pline"/></svg>多段线</button>
        <button class="big"><svg><use href="#circle"/></svg>圆<i class="caret"></i></button>
        <button class="big"><svg><use href="#arc"/></svg>圆弧<i class="caret"></i></button>
        <div class="stack">
          <button class="cell" aria-label="Rectangle"><svg><use href="#rect"/></svg><i class="caret"></i></button>
          <button class="cell" aria-label="Ellipse"><svg><use href="#ellipse"/></svg><i class="caret"></i></button>
          <button class="cell" aria-label="Hatch"><svg><use href="#hatch"/></svg><i class="caret"></i></button>
        </div>
      </div>
      <h2 class="panel-title">绘图<i class="caret large"></i></h2>
    </section>
    <section class="panel">
      <div class="panel-body modify">
        <button class="cell"><svg><use href="#move"/></svg>移动</button>
        <button class="cell"><svg><use href="#rotate"/></svg>旋转</button>
        <button class="cell"><svg><use href="#trim"/></svg>修剪<i class="caret"></i></button>
        <button class="cell" aria-label="Erase"><svg><use href="#erase"/></svg></button>
        <button class="cell"><svg><use href="#copy"/></svg>复制</button>
        <button class="cell"><svg><use href="#mirror"/></svg>镜像</button>
        <button class="cell"><svg><use href="#fillet"/></svg>圆角<i class="caret"></i></button>
        <button class="cell" aria-label="Explode"><svg><use href="#explode"/></svg></button>
        <button class="cell"><svg><use href="#stretch"/></svg>拉伸</button>
        <button class="cell"><svg><use href="#scale"/></svg>缩放</button>
        <button class="cell"><svg><use href="#array"/></svg>阵列<i class="caret"></i></button>
        <button class="cell" aria-label="Offset"><svg><use href="#offset"/></svg></button>
      </div>
      <h2 class="panel-title">修改<i class="caret large"></i></h2>
    </section>
    <section class="panel">
      <div class="panel-body annotate">
        <button class="big"><svg><use href="#text"/></svg>文字<i class="caret"></i></button>
        <button class="big"><svg><use href="#dimbig"/></svg>标注</button>
        <div class="stack">
          <button class="cell"><svg><use href="#dimlin"/></svg>线性<i class="caret"></i></button>
          <button class="cell"><svg><use href="#leader"/></svg>引线<i class="caret"></i></button>
          <button class="cell"><svg><use href="#table"/></svg>表格</button>
        </div>
      </div>
      <h2 class="panel-title">注释<i class="caret large"></i></h2>
    </section>
    <section class="panel">
      <div class="panel-body layers">
        <button class="big"><svg><use href="#layerprop"/></svg>图层<br>特性</button>
        <div class="stack wide">
          <div class="combo">
            <svg><use href="#bulb"/></svg>
            <svg><use href="#sun"/></svg>
            <svg><use href="#lock-open"/></svg>
            <span class="swatch"></span>
            <select aria-label="Layer"><option>1中心线</option></select>
            <i class="caret large"></i>
          </div>
          <div class="icon-row">
            <button class="cell" aria-label="Layer off"><svg><use href="#layoff"/></svg></button>
            <button class="cell" aria-label="Isolate"><svg><use href="#layiso"/></svg></button>
            <button class="cell" aria-label="Freeze"><svg><use href="#layfreeze"/></svg></button>
            <button class="cell" aria-label="Lock"><svg><use href="#laylock"/></svg></button>
            <button class="cell"><svg><use href="#laycur"/></svg>置为当前</button>
          </div>
          <div class="icon-row">
            <button class="cell" aria-label="Turn all on"><svg><use href="#layon"/></svg></button>
            <button class="cell" aria-label="Unisolate"><svg><use href="#layuniso"/></svg></button>
            <button class="cell" aria-label="Thaw all"><svg><use href="#laythaw"/></svg></button>
            <button class="cell" aria-label="Unlock"><svg><use href="#layunlock"/></svg></button>
            <button class="cell"><svg><use href="#laymatch"/></svg>匹配图层</button>
          </div>
        </div>
      </div>
      <h2 class="panel-title">图层<i class="caret large"></i></h2>
    </section>
    <section class="panel">
      <div class="panel-body blocks">
        <button class="big"><svg><use href="#insert"/></svg>插入<i class="caret"></i></button>
        <div class="stack">
          <button class="cell"><svg><use href="#block"/></svg>创建</button>
          <button class="cell"><svg><use href="#blockedit"/></svg>编辑</button>
          <button class="cell"><svg><use href="#attedit"/></svg>编辑属性<i class="caret"></i></button>
        </div>
      </div>
      <h2 class="panel-title">块<i class="caret large"></i></h2>
    </section>
    <section class="panel">
      <div class="panel-body properties">
        <button class="big"><svg><use href="#matchprop"/></svg>特性<br>匹配</button>
        <div class="stack wide">
          <div class="prop-row">
            <svg><use href="#wheel"/></svg>
            <div class="combo"><span class="swatch light"></span><select aria-label="Color"><option>ByLayer</option></select><i class="caret large"></i></div>
          </div>
          <div class="prop-row">
            <svg><use href="#lweights"/></svg>
            <div class="combo tight"><span class="weight"></span><select aria-label="Lineweight"><option>ByLayer</option></select><i class="caret large"></i></div>
          </div>
          <div class="prop-row">
            <svg><use href="#ltypes"/></svg>
            <div class="combo tight"><svg class="ltype" viewBox="0 0 88 8"><path d="M0 4h34M40 4h6M52 4h36"/></svg><select aria-label="Linetype"><option>ByLayer</option></select><i class="caret large"></i></div>
          </div>
        </div>
      </div>
      <h2 class="panel-title">特性<i class="caret large"></i><svg class="launcher" viewBox="0 0 8 8"><path d="M0 0l6 6M7 1v6H1"/></svg></h2>
    </section>
    <section class="panel">
      <div class="panel-body groups">
        <button class="big"><svg><use href="#group"/></svg>组</button>
        <div class="stack">
          <button class="cell" aria-label="Edit group"><svg><use href="#groupedit"/></svg></button>
          <button class="cell" aria-label="Add to group"><svg><use href="#groupadd"/></svg></button>
          <button class="cell pressed" aria-label="Group selection"><svg><use href="#groupsel"/></svg></button>
        </div>
      </div>
      <h2 class="panel-title">组<i class="caret large"></i></h2>
    </section>
    <section class="panel">
      <div class="panel-body utils">
        <button class="big"><svg><use href="#measure"/></svg>测量<i class="caret"></i></button>
        <div class="stack">
          <button class="cell" aria-label="Quick select"><svg><use href="#quickcalc"/></svg></button>
          <button class="cell" aria-label="ID point"><svg><use href="#idpoint"/></svg></button>
          <button class="cell" aria-label="Calculator"><svg><use href="#calc"/></svg></button>
        </div>
      </div>
      <h2 class="panel-title">实用工具<i class="caret large"></i></h2>
    </section>
    <section class="panel">
      <div class="panel-body clip">
        <button class="big"><svg><use href="#paste"/></svg>粘贴<i class="caret"></i></button>
        <div class="stack">
          <button class="cell" aria-label="Cut"><svg><use href="#cut"/></svg></button>
          <button class="cell" aria-label="Copy clip"><svg><use href="#copyclip"/></svg></button>
        </div>
      </div>
      <h2 class="panel-title">剪贴板</h2>
    </section>
    <section class="panel">
      <div class="panel-body view">
        <button class="big"><svg><use href="#base"/></svg>基点<i class="caret"></i></button>
      </div>
      <h2 class="panel-title with-launcher">视图<i class="caret large"></i><svg class="launcher" viewBox="0 0 8 8"><path d="M0 0l6 6M7 1v6H1"/></svg></h2>
    </section>
  </div>

  <nav class="file-tabs">
    <button class="file-tab"><span>开始</span></button>
    <button class="file-tab"><span>Drawing1*</span><svg viewBox="0 0 12 12"><path d="M1 1l10 10M11 1L1 11"/></svg></button>
    <button class="file-tab active"><span>Drawing2*</span><svg viewBox="0 0 12 12"><path d="M1 1l10 10M11 1L1 11"/></svg></button>
    <button class="add-tab" aria-label="New tab"><svg viewBox="0 0 14 14"><path d="M7 1v12M1 7h12"/></svg></button>
  </nav>

  <div class="toolbars">
    <div class="toolbar-row">
      <div class="toolbar"><i class="grip"></i>
        <button class="tool" aria-label="Orbit"><svg><use href="#orbit"/></svg></button>
        <button class="tool" aria-label="Swivel"><svg><use href="#blob"/></svg></button>
        <button class="tool" aria-label="Adjust distance"><svg><use href="#blob2"/></svg></button>
      </div>
      <div class="toolbar"><i class="grip"></i>
        <button class="tool" aria-label="Distance"><svg><use href="#distance"/></svg></button>
        <button class="tool" aria-label="Radius"><svg><use href="#radius"/></svg></button>
        <button class="tool" aria-label="Angle"><svg><use href="#angle"/></svg></button>
        <button class="tool" aria-label="Area"><svg><use href="#area"/></svg></button>
        <button class="tool" aria-label="Volume"><svg><use href="#volume"/></svg></button>
      </div>
      <div class="toolbar"><i class="grip"></i>
        <button class="tool" aria-label="2D wireframe"><svg><use href="#vs2d"/></svg></button>
        <i class="sep"></i>
        <button class="tool" aria-label="3D wireframe"><svg><use href="#vswire"/></svg></button>
        <button class="tool" aria-label="Hidden"><svg><use href="#vshide"/></svg></button>
        <button class="tool" aria-label="Realistic"><svg><use href="#vsreal"/></svg></button>
        <button class="tool" aria-label="Conceptual"><svg><use href="#vsconc"/></svg></button>
        <i class="sep"></i>
        <button class="tool" aria-label="Visual styles manager"><svg><use href="#vsman"/></svg></button>
      </div>
      <div class="toolbar"><i class="grip"></i>
        <button class="tool" aria-label="UCS"><svg><use href="#ucs"/></svg></button>
        <button class="tool" aria-label="Named UCS"><svg><use href="#ucsman"/></svg></button>
        <i class="sep"></i>
        <div class="pale-combo ucs-combo">
          <svg class="globe" viewBox="0 0 20 20"><circle cx="10" cy="10" r="8"/><path d="M6 7q5-4 7 0v5M8 12l5 3"/></svg>
          <select aria-label="UCS name"><option>世界</option></select>
          <svg class="chev" viewBox="0 0 12 8"><path d="M1 1l5 6 5-6"/></svg>
        </div>
      </div>
      <div class="toolbar"><i class="grip"></i>
        <button class="tool" aria-label="Pan"><svg><use href="#pan"/></svg></button>
        <button class="tool" aria-label="Zoom"><svg><use href="#zoom"/></svg></button>
        <button class="tool fly" aria-label="3D orbit"><svg><use href="#orbit"/></svg></button>
        <button class="tool fly" aria-label="Camera"><svg><use href="#camera"/></svg></button>
        <button class="tool fly" aria-label="Walk"><svg><use href="#walk"/></svg></button>
        <i class="sep"></i>
        <div class="pale-combo view-combo">
          <select aria-label="Named view"><option></option></select>
          <svg class="chev" viewBox="0 0 12 8"><path d="M1 1l5 6 5-6"/></svg>
        </div>
      </div>
      <div class="toolbar"><i class="grip"></i>
        <button class="tool" aria-label="Erase"><svg><use href="#erase"/></svg></button>
        <button class="tool" aria-label="Copy"><svg><use href="#copy"/></svg></button>
        <button class="tool" aria-label="Mirror"><svg><use href="#mirror"/></svg></button>
        <button class="tool" aria-label="Offset"><svg><use href="#offset"/></svg></button>
        <button class="tool fly" aria-label="Array"><svg><use href="#array"/></svg></button>
        <button class="tool" aria-label="Move"><svg><use href="#move"/></svg></button>
        <button class="tool" aria-label="Rotate"><svg><use href="#rotate"/></svg></button>
        <button class="tool" aria-label="Scale"><svg><use href="#scale"/></svg></button>
        <button class="tool" aria-label="Stretch"><svg><use href="#stretch"/></svg></button>
        <button class="tool" aria-label="Trim"><svg><use href="#trim"/></svg></button>
        <button class="tool" aria-label="Extend"><svg><use href="#extend"/></svg></button>
        <button class="tool" aria-label="Break at point"><svg><use href="#breakpt"/></svg></button>
        <button class="tool" aria-label="Break"><svg><use href="#break"/></svg></button>
        <button class="tool" aria-label="Join"><svg><use href="#join"/></svg></button>
        <button class="tool" aria-label="Chamfer"><svg><use href="#chamfer"/></svg></button>
        <button class="tool" aria-label="Fillet"><svg><use href="#fillet"/></svg></button>
        <button class="tool" aria-label="Blend curves"><svg><use href="#blend"/></svg></button>
        <button class="tool" aria-label="Explode"><svg><use href="#explode"/></svg></button>
      </div>
    </div>
    <div class="toolbar-row">
      <div class="toolbar"><i class="grip"></i>
        <button class="tool" aria-label="Polysolid"><svg><use href="#polysolid"/></svg></button>
        <button class="tool" aria-label="Box"><svg><use href="#box"/></svg></button>
        <button class="tool" aria-label="Wedge"><svg><use href="#wedge"/></svg></button>
        <button class="tool" aria-label="Cone"><svg><use href="#cone"/></svg></button>
        <button class="tool" aria-label="Sphere"><svg><use href="#sphere"/></svg></button>
        <button class="tool" aria-label="Cylinder"><svg><use href="#cylinder"/></svg></button>
        <button class="tool" aria-label="Torus"><svg><use href="#torus"/></svg></button>
        <button class="tool" aria-label="Pyramid"><svg><use href="#pyramid"/></svg></button>
        <button class="tool" aria-label="Helix"><svg><use href="#helix"/></svg></button>
        <button class="tool" aria-label="Planar surface"><svg><use href="#mesh"/></svg></button>
        <i class="sep"></i>
        <button class="tool" aria-label="Presspull"><svg><use href="#presspull"/></svg></button>
        <button class="tool" aria-label="Extrude"><svg><use href="#extrude"/></svg></button>
        <button class="tool" aria-label="Sweep"><svg><use href="#sweep"/></svg></button>
        <button class="tool" aria-label="Revolve"><svg><use href="#revolve"/></svg></button>
        <button class="tool" aria-label="Loft"><svg><use href="#loft"/></svg></button>
        <i class="sep"></i>
        <button class="tool" aria-label="Union"><svg><use href="#union"/></svg></button>
        <button class="tool" aria-label="Subtract"><svg><use href="#subtract"/></svg></button>
        <button class="tool" aria-label="Intersect"><svg><use href="#intersect"/></svg></button>
        <i class="sep"></i>
        <button class="tool" aria-label="3D move"><svg><use href="#mouse"/></svg></button>
        <button class="tool" aria-label="3D rotate"><svg><use href="#gizmo"/></svg></button>
        <button class="tool" aria-label="3D align"><svg><use href="#align"/></svg></button>
        <button class="tool" aria-label="3D array"><svg><use href="#array3d"/></svg></button>
      </div>
      <div class="toolbar floating"><i class="grip"></i>
        <button class="tool fly" aria-label="Geometric constraint"><svg><use href="#coincident"/></svg></button>
        <button class="tool" aria-label="Auto constrain"><svg><use href="#autocons"/></svg></button>
        <button class="tool" aria-label="Show or hide constraints"><svg><use href="#conshow"/></svg></button>
        <button class="tool" aria-label="Show all constraints"><svg><use href="#conshow"/></svg></button>
        <button class="tool" aria-label="Hide all constraints"><svg><use href="#conhide"/></svg></button>
        <i class="sep"></i>
        <button class="tool fly" aria-label="Dimensional constraint"><svg><use href="#dimlock"/></svg></button>
        <button class="tool" aria-label="Show dynamic constraints"><svg><use href="#dimshow"/></svg></button>
        <button class="tool" aria-label="Show all dynamic constraints"><svg><use href="#dimshow"/></svg></button>
        <button class="tool" aria-label="Infer constraints"><svg viewBox="0 0 30 30"><use href="#puff"/><text x="8" y="24" class="qmark">?</text></svg></button>
        <i class="sep"></i>
        <button class="tool" aria-label="Delete constraints"><svg><use href="#condel"/></svg></button>
        <button class="tool" aria-label="Constraint settings"><svg><use href="#conset"/></svg></button>
        <button class="tool" aria-label="Parameters manager"><svg viewBox="0 0 30 30"><text x="5" y="23" class="fx">fx</text></svg></button>
        <i class="sep"></i>
        <button class="bar-close" aria-label="Close toolbar"><svg viewBox="0 0 8 8"><path d="M1 1l6 6M7 1L1 7"/></svg></button>
      </div>
    </div>
  </div>

  <main class="workarea">
    <aside class="side">
      <div class="vbar"><i class="grip"></i>
        <button class="tool" aria-label="Line"><svg><use href="#line"/></svg></button>
        <button class="tool" aria-label="Construction line"><svg><use href="#xline"/></svg></button>
        <button class="tool" aria-label="Polyline"><svg><use href="#pline"/></svg></button>
        <button class="tool" aria-label="Polygon"><svg><use href="#polygon"/></svg></button>
        <button class="tool" aria-label="Rectangle"><svg><use href="#rect"/></svg></button>
        <button class="tool" aria-label="Arc"><svg><use href="#arc"/></svg></button>
        <button class="tool" aria-label="Circle"><svg><use href="#circle"/></svg></button>
        <button class="tool" aria-label="Revision cloud"><svg><use href="#cloud"/></svg></button>
        <button class="tool" aria-label="Spline"><svg><use href="#spline"/></svg></button>
        <button class="tool" aria-label="Ellipse"><svg><use href="#ellipse"/></svg></button>
        <button class="tool" aria-label="Ellipse arc"><svg><use href="#ellarc"/></svg></button>
        <button class="tool fly" aria-label="Insert block"><svg><use href="#insert"/></svg></button>
        <button class="tool" aria-label="Make block"><svg><use href="#block"/></svg></button>
        <button class="tool" aria-label="Point"><svg><use href="#point"/></svg></button>
        <button class="tool" aria-label="Hatch"><svg><use href="#hatch"/></svg></button>
        <button class="tool" aria-label="Gradient"><svg><use href="#gradient"/></svg></button>
        <button class="tool" aria-label="Region"><svg><use href="#region"/></svg></button>
        <button class="tool" aria-label="Table"><svg><use href="#table"/></svg></button>
        <button class="tool" aria-label="Text"><svg><use href="#text"/></svg></button>
        <button class="tool" aria-label="Add selected"><svg><use href="#addsel"/></svg></button>
      </div>
      <div class="vbar"><i class="grip"></i>
        <button class="tool" aria-label="Linear"><svg><use href="#dimlin"/></svg></button>
        <button class="tool" aria-label="Aligned"><svg><use href="#dimali"/></svg></button>
        <button class="tool" aria-label="Arc length"><svg><use href="#dimarc"/></svg></button>
        <button class="tool" aria-label="Ordinate"><svg><use href="#dimord"/></svg></button>
        <i class="hsep"></i>
        <button class="tool" aria-label="Radius"><svg><use href="#dimrad"/></svg></button>
        <button class="tool" aria-label="Jogged"><svg><use href="#dimjog"/></svg></button>
        <button class="tool" aria-label="Diameter"><svg><use href="#dimdia"/></svg></button>
        <button class="tool" aria-label="Angular"><svg><use href="#dimang"/></svg></button>
        <i class="hsep"></i>
        <button class="tool" aria-label="Quick dimension"><svg><use href="#qdim"/></svg></button>
        <button class="tool" aria-label="Baseline"><svg><use href="#dimbase"/></svg></button>
        <button class="tool" aria-label="Continue"><svg><use href="#dimcont"/></svg></button>
        <button class="tool" aria-label="Dimension space"><svg><use href="#dimspace"/></svg></button>
        <button class="tool" aria-label="Dimension break"><svg><use href="#dimbreak"/></svg></button>
        <i class="hsep"></i>
        <button class="tool" aria-label="Tolerance">
          <svg viewBox="0 0 30 30"><path d="M1 5h28v20H1z" fill="#eee" stroke="#444"/><path d="M15 5v20" class="k thin"/><circle cx="8" cy="15" r="4" class="k thin"/><path d="M2 15h12M8 9v12" class="k thin"/><text x="16" y="21" class="tolnum">.1</text></svg>
        </button>
        <button class="tool" aria-label="Center mark"><svg><use href="#center"/></svg></button>
        <button class="tool" aria-label="Inspection"><svg><use href="#inspect"/></svg></button>
        <button class="tool" aria-label="Jogged linear"><svg><use href="#jogline"/></svg></button>
        <i class="hsep"></i>
        <button class="tool" aria-label="Dimension edit"><svg><use href="#dimedit"/></svg></button>
        <button class="tool" aria-label="Dimension text edit"><svg><use href="#dimtedit"/></svg></button>
        <button class="tool" aria-label="Dimension update"><svg><use href="#dimupd"/></svg></button>
        <i class="hsep"></i>
        <button class="tool" aria-label="Dimension style"><svg><use href="#dimstyle"/></svg></button>
      </div>
    </aside>

    <div class="canvas">
      <p class="viewport-label">[−][俯视][二维线框]</p>
      <svg class="drawing">
        <g class="centerline">
          <path d="M574 368.5H668M694 368.5h26M746 368.5L879 367.5M904 367.5h25M956 367.5H1087M1114 366.5h26M1166 366.5H1261"/>
          <path d="M878.5 224L879 315M879.5 342v25M880 394L881 524M881.5 552v25M881.5 603L882.5 696"/>
        </g>
        <g class="crosshair">
          <path d="M1407.5 34V209M1407.5 218V393M1228 213.500H1403M1412 213.500H1587M1403.500 209.500h8v8h-8z"/>
        </g>
        <g class="ucs-mark">
          <path d="M413.5 806v52M413 857.500h52M409.500 852.500h9v9h-9z"/>
          <path d="M415 789l6 7 6-7M421 796v7M467 843l13 13M480 843l-13 13"/>
        </g>
      </svg>

      <div class="viewcube">
        <svg viewBox="0 0 140 160">
          <circle cx="70" cy="81" r="53" class="ring"/>
          <path d="M44.500 56.500h51v51h-51z" class="face"/>
          <path d="M54 66h32v32H54z" class="inner"/>
          <text x="70" y="33">北</text>
          <text x="13" y="90">西</text>
          <text x="126" y="90">东</text>
          <text x="70" y="147">南</text>
          <text x="70" y="92" class="top">上</text>
        </svg>
        <button class="wcs">WCS<svg viewBox="0 0 10 6"><path d="M1 1h8L5 5z"/></svg></button>
      </div>

      <ul class="suggest">
        <li class="selected"><svg><use href="#gear"/></svg><span>LTS (LTSCALE)</span>
          <button class="round" aria-label="Help">?</button>
          <button class="round web" aria-label="Search online"><svg viewBox="0 0 22 22"><path d="M4 8q5-6 9-2l-2 3M7 5l5 1"/><circle cx="14" cy="13" r="3"/><path d="M16 16l4 5"/></svg></button>
        </li>
        <li><span class="blank"></span><span>DEFAULTSCALELIST</span></li>
        <li class="category"><svg><use href="#gear"/></svg><span>PSLTSCALE</span><i class="plus">+</i></li>
      </ul>

      <div class="command">
        <div class="command-tools">
          <i class="grip"></i>
          <button aria-label="Close command line"><svg viewBox="0 0 16 16"><path d="M2 2l12 12M14 2L2 14"/></svg></button>
          <button aria-label="Customize"><svg viewBox="0 0 22 22"><path d="M3 1l4 4-2 3-4-1q0 6 6 6l9 8 4-3-9-9q1-7-8-8z" fill="#e4e6ea"/></svg></button>
        </div>
        <svg class="prompt" viewBox="0 0 22 22"><path d="M0 1h22v20H0z" fill="#e8ebf2"/><path d="M4 6l5 5-5 5M11 17h7" fill="none" stroke="#5d6370" stroke-width="2"/></svg>
        <i class="caret grey"></i>
        <label class="entry"><input type="text" aria-label="Command" value="LTS" size="3"></label>
      </div>

      <svg class="watermark" viewBox="0 0 460 225">
        <text x="40" y="157" class="wm-bai">Bai</text>
        <ellipse cx="195" cy="82" rx="16" ry="20"/>
        <ellipse cx="223" cy="54" rx="15" ry="21"/>
        <ellipse cx="258" cy="57" rx="16" ry="20"/>
        <ellipse cx="281" cy="91" rx="15" ry="19"/>
        <path d="M237 85c18 0 20 14 32 26 12 10 19 18 19 28 0 14-10 22-26 21-15-3-33-5-48 0-17 2-27-8-26-23 0-12 10-20 20-29 12-12 14-23 29-23z"/>
        <text x="203" y="147" class="wm-du">du</text>
        <text x="300" y="151" class="wm-cn">经验</text>
        <text x="44" y="209" class="wm-url">jingyan.baidu.com</text>
      </svg>
    </div>
  </main>

  <footer class="statusbar">
    <div class="sgroup"><button class="model">模型</button></div>
    <div class="sgroup">
      <button aria-label="Grid"><svg><use href="#s-grid"/></svg></button>
      <button aria-label="Snap"><svg><use href="#s-snap"/></svg><i class="caret"></i></button>
    </div>
    <div class="sgroup">
      <button class="ruled" aria-label="Dynamic input"><svg><use href="#s-dyn"/></svg></button>
      <button aria-label="Ortho"><svg><use href="#s-ortho"/></svg></button>
      <button aria-label="Polar"><svg><use href="#s-polar"/></svg><i class="caret"></i></button>
      <button class="ruled" aria-label="Isodraft"><svg><use href="#s-iso"/></svg><i class="caret"></i></button>
      <button aria-label="Object tracking"><svg><use href="#s-track"/></svg></button>
      <button class="ruled" aria-label="Object snap"><svg><use href="#s-snapobj"/></svg><i class="caret"></i></button>
      <button class="ruled" aria-label="Lineweight"><svg><use href="#s-lw"/></svg></button>
      <button aria-label="3D object snap"><svg><use href="#s-cube"/></svg><i class="caret"></i></button>
    </div>
    <div class="sgroup">
      <button aria-label="Annotation visibility"><svg><use href="#s-ann1"/></svg></button>
      <button aria-label="Auto scale"><svg><use href="#s-ann2"/></svg></button>
      <button aria-label="Annotation scale"><svg><use href="#s-ann3"/></svg></button>
      <button class="ratio">1:1<i class="caret"></i></button>
    </div>
    <div class="sgroup">
      <button class="ruled" aria-label="Workspace switching"><svg class="sgear"><use href="#gear"/></svg><i class="caret"></i></button>
      <button aria-label="Annotation monitor"><svg><use href="#s-plus"/></svg></button>
    </div>
    <div class="sgroup"><button aria-label="Isolate objects"><svg><use href="#s-shapes"/></svg></button></div>
    <div class="sgroup"><button aria-label="Graphics performance"><svg><use href="#s-perf"/></svg></button></div>
    <div class="sgroup last">
      <button aria-label="Clean screen"><svg><use href="#s-full"/></svg></button>
      <button aria-label="Customization"><svg><use href="#s-menu"/></svg></button>
    </div>
  </footer>
</body>
</html>
```
FILE: styles.css
```css
* {
  box-sizing: border-box;
}

body {
  display: flex;
  flex-direction: column;
  min-height: 100vh;
  margin: 0;
  border-top: 1px solid #33363c;
  border-left: 2px solid #b4b6b8;
  border-bottom: 2px solid #a8a8a8;
  background-color: #5c5c5c;
  color: #f2f2f2;
  font: 18px/24px "Open Sans", "Noto Sans CJK SC", sans-serif;
}

button, select, input {
  margin: 0;
  padding: 0;
  border: 0;
  border-radius: 0;
  background: none;
  color: inherit;
  font: inherit;
}

select {
  appearance: none;
  flex: 1;
  min-width: 0;
}

h1, h2, p, ul {
  margin: 0;
  padding: 0;
  font-size: inherit;
  font-weight: normal;
}

.sprite {
  position: absolute;
}

/* strokes and fills used by the icons */
.w { fill: none; stroke: #e6e6e6; stroke-width: 1.5; }
.b { fill: none; stroke: #72a8f5; stroke-width: 1.5; }
.k { fill: none; stroke: #222; stroke-width: 2; }
.s { fill: none; stroke: #b8b8b8; stroke-width: 2; }
.thin { stroke-width: 1; }
.n { fill: #3a4152; stroke: #72a8f5; stroke-width: 1.5; }
.nw { fill: #fff; }
.fw { fill: url(#gw); stroke: #3c3c3c; }
.fb { fill: url(#gb); stroke: #2c4770; }
.lay { fill: #eceef2; stroke: #4a4a4a; }
.set { fill: #24407c; stroke: #6d9be8; }
.dash { stroke-dasharray: 4 1; }
.dots { stroke-dasharray: 2 1; }
.aa { marker-start: url(#aw); marker-end: url(#aw); }
.ae { marker-end: url(#aw); }
.ba2 { marker-start: url(#aw); }
.ba { marker-start: url(#ab); marker-end: url(#ab); }
.be { marker-end: url(#ab); }
.ke { marker-end: url(#ak); }
.tolnum { fill: #111; font: bold 14px "Liberation Sans", sans-serif; }
.qmark { fill: #1d4f80; font: bold 24px "Liberation Sans", sans-serif; }
.fx { fill: #ccc; font: italic 26px "Liberation Serif", serif; }

.caret {
  flex: none;
  width: 0;
  height: 0;
  border: 4px solid transparent;
  border-top: 5px solid #f2f2f2;
  border-bottom: 0;
}
.caret.large { border-width: 6px 6px 0; }
.caret.dark { border-top-color: #333; }
.caret.faded { border-top-color: #bbb; }
.caret.grey { border-width: 5px 5px 0; border-top-color: #8c8c8c; }

.caret-right {
  display: block;
  border: 6px solid transparent;
  border-left: 7px solid #fff;
  border-right: 0;
}

/* title bar */
.titlebar {
  position: relative;
  display: flex;
  align-items: flex-end;
  height: 44px;
  padding-left: 61px;
  background-color: #fff;
}

.app-button {
  position: absolute;
  z-index: 2;
  left: 10px;
  top: 18px;
  display: flex;
  align-items: center;
  gap: 1px;
  width: 41px;
  height: 41px;
  padding: 0 2px;
  border: 1px solid #111;
  background: linear-gradient(#c2c2c2, #757575);
}
.app-button svg {
  width: 26px;
  height: 28px;
}

.qat, .infocenter {
  display: flex;
  align-items: center;
  height: 36px;
  border: 1px solid #6c6c6c;
  border-bottom: 0;
  background: linear-gradient(#aaa, #7c7c7c);
}
.qat {
  width: 808px;
  padding-left: 7px;
}

.qbtn {
  flex: none;
  width: 36px;
  height: 34px;
}
.qbtn svg, .signin svg {
  display: block;
  width: 24px;
  height: 24px;
  margin: auto;
}
.qat .caret {
  margin: 0 5px;
}
.redo svg {
  transform: scaleX(-1);
  opacity: 0.35;
}

.workspace {
  display: flex;
  align-items: center;
  flex: 1;
  height: 32px;
  margin: 0 0 0 2px;
  padding-left: 5px;
  border: 2px solid #383838;
  background: linear-gradient(#595959, #727272);
}
.workspace svg {
  width: 23px;
  height: 23px;
  margin-right: 5px;
}
.workspace .caret {
  margin: 0 2px;
}

.more {
  width: 27px;
}
.more svg {
  display: block;
  width: 12px;
  height: 12px;
  margin: auto;
  fill: #fff;
}

.title {
  display: flex;
  flex: 1;
  justify-content: center;
  gap: 32px;
  height: 44px;
  color: #000;
  font-size: 19px;
  line-height: 44px;
}

.infocenter {
  width: 647px;
}
.expand {
  padding: 0 7px;
}
.search {
  width: 271px;
  height: 33px;
  padding: 0 4px;
  border: 2px solid #3a3a3a;
  background-color: #727272;
  font-style: italic;
  font-weight: bold;
  font-size: 17px;
}
.search::placeholder {
  color: #bdbdbd;
}
.signin {
  display: flex;
  align-items: center;
  flex: 1;
  padding: 0 14px 0 6px;
}
.signin svg {
  margin: 0 6px 0 0;
}
.signin .caret {
  margin-left: auto;
}
.overflow {
  width: 38px;
  height: 30px;
  margin-left: 14px;
  border-left: 1px solid #9c9c9c;
}
.overflow svg {
  width: 11px;
  height: 10px;
  fill: #000;
}

.winctl {
  display: flex;
  width: 269px;
  height: 44px;
  padding-left: 59px;
}
.winctl button {
  width: 70px;
}
.winctl svg {
  width: 16px;
  height: 16px;
  fill: none;
  stroke: #8a8a8a;
}

/* menu bar */
.menubar {
  display: flex;
  align-items: center;
  gap: 32px;
  height: 33px;
  padding-left: 78px;
  border-top: 1px solid #3a3a3a;
  border-bottom: 2px solid #2d2d2d;
  background: linear-gradient(#adadad, #585858);
}
.menubar a {
  color: #fff;
  text-decoration: none;
}
.docctl {
  display: flex;
  gap: 8px;
  margin-left: auto;
  padding-right: 6px;
}
.docctl svg {
  display: block;
  width: 17px;
  height: 17px;
  fill: none;
  stroke: #2b2b2b;
  stroke-width: 3;
}
.docctl button:nth-child(2) svg {
  stroke-width: 2;
}

/* ribbon */
.ribbon-tabs {
  display: flex;
  align-items: flex-end;
  height: 30px;
  padding-left: 8px;
  border-bottom: 2px solid #303030;
  background-color: #535353;
  color: #d2d2d2;
}
.ribbon-tabs button {
  height: 26px;
  padding: 0 15px;
  line-height: 24px;
}
.ribbon-tabs button:nth-child(n+9) {
  padding: 0 16px;
}
.ribbon-tabs .active {
  padding: 0 13px;
  margin-right: 2px;
  border: 1px solid #333;
  border-bottom: 0;
  border-radius: 3px 3px 0 0;
  background: linear-gradient(#7a7a7a, #636363);
  color: #fff;
}
.ribbon-tabs .fold {
  display: flex;
  align-items: center;
  gap: 6px;
  margin-left: 15px;
}
.fold-icon {
  display: flex;
  align-items: center;
  justify-content: center;
  width: 20px;
  height: 13px;
  border: 1px solid #bbb;
  border-radius: 3px;
  background-color: #e6e6ea;
}
.fold-icon::before {
  content: "";
  border: 4px solid transparent;
  border-top: 0;
  border-bottom: 5px solid #333;
}

.ribbon {
  display: grid;
  grid-template-columns: 315fr 340fr 234fr 378fr 202fr 325fr 102fr 114fr 114fr 90fr;
  height: 146px;
  padding-left: 4px;
  border-bottom: 1px solid #8a8a8a;
  background-color: #5d5d5d;
}
.panel {
  display: flex;
  flex-direction: column;
  border-right: 2px solid #434343;
}
.panel:last-child {
  border-right: 0;
}
.panel-body {
  display: flex;
  flex: 1;
  padding-top: 5px;
}
.panel-title {
  position: relative;
  display: flex;
  align-items: center;
  justify-content: center;
  gap: 10px;
  height: 27px;
  margin-left: 1px;
  background: linear-gradient(#535353, #474747);
  white-space: nowrap;
}
.with-launcher {
  padding-right: 20px;
}
.launcher {
  position: absolute;
  right: 3px;
  bottom: 9px;
  width: 9px;
  height: 9px;
  fill: none;
  stroke: #f2f2f2;
  stroke-width: 2;
}

.big {
  display: flex;
  flex: none;
  flex-direction: column;
  align-items: center;
  align-self: flex-start;
  width: 60px;
  height: 110px;
  padding-top: 5px;
}
.big > svg {
  flex: none;
  width: 44px;
  height: 44px;
  margin-bottom: 9px;
}
.big .caret {
  margin-top: 4px;
}

.stack {
  display: grid;
  grid-auto-rows: 36px;
  align-content: start;
}
.stack.wide {
  flex: 1;
}
.cell {
  display: flex;
  align-items: center;
  gap: 6px;
  height: 36px;
  white-space: nowrap;
}
.cell svg {
  flex: none;
  width: 26px;
  height: 26px;
}
.cell .caret {
  margin-left: 8px;
}
.pressed {
  justify-content: center;
  border: 1px solid #2c4770;
  background: linear-gradient(#6d8ec4, #4d6ea6);
}

.draw { padding-left: 2px; }
.draw .stack { padding-left: 13px; }
.modify {
  display: grid;
  grid-template-columns: 88px 88px 112px 26px;
  grid-auto-rows: 36px;
  padding-left: 10px;
}
.annotate { padding-left: 7px; }
.annotate .big { width: 63px; }
.annotate .stack { padding-left: 3px; }
.layers .big, .blocks .big, .properties .big { width: 64px; }
.blocks .stack { padding-left: 2px; }
.groups .big { width: 60px; }
.groups .cell { justify-content: center; width: 34px; }
.groups .pressed { height: 33px; }
.utils .big { width: 74px; }
.utils .stack { padding-left: 3px; }
.clip .big { width: 76px; }
.view .big { width: 88px; }

.icon-row {
  display: flex;
  gap: 10px;
  padding-left: 4px;
}

.combo {
  display: flex;
  align-items: center;
  flex: 1;
  gap: 6px;
  height: 33px;
  margin-right: 3px;
  padding: 0 3px 0 4px;
  border: 2px solid #363636;
  background: linear-gradient(#737373, #585858);
}
.combo > svg {
  width: 22px;
  height: 24px;
}
.swatch {
  width: 22px;
  height: 22px;
  border: 1px solid #000;
  background-color: #f00;
}
.combo .swatch {
  margin-right: 3px;
}
.swatch.light {
  width: 24px;
  height: 24px;
  margin-left: 14px;
  border-color: #aaa;
}
.properties .combo .light {
  margin-right: 8px;
}
.prop-row {
  display: flex;
  align-items: center;
  gap: 4px;
}
.prop-row > svg {
  width: 24px;
  height: 26px;
}
.combo.tight {
  gap: 4px;
  padding-left: 10px;
}
.weight {
  width: 88px;
  height: 6px;
  background-color: #fff;
}
.combo > .ltype {
  width: 88px;
  height: 8px;
  stroke: #ccc;
  stroke-width: 2;
}

/* file tabs */
.file-tabs {
  display: flex;
  align-items: flex-end;
  height: 39px;
  padding-left: 22px;
  background-color: #383838;
}
.file-tab {
  position: relative;
  display: flex;
  align-items: center;
  justify-content: space-between;
  width: 184px;
  height: 33px;
  padding: 0 6px 0 27px;
  color: #bdbdbd;
}
.file-tab::before {
  content: "";
  position: absolute;
  left: 0;
  top: 0;
  width: 206px;
  height: 33px;
  clip-path: path("M0 33C15 31 12 0 30 0H176C192 0 190 31 206 33Z");
  background: linear-gradient(#626262, #515151);
}
.file-tab.active {
  z-index: 1;
  color: #fff;
}
.file-tab.active::before {
  background: linear-gradient(#8a8a8a, #626262);
}
.file-tab > * {
  position: relative;
}
.file-tab svg {
  width: 12px;
  height: 12px;
  stroke: #3c3c3c;
  stroke-width: 3;
}
.add-tab {
  width: 31px;
  height: 22px;
  margin: 0 0 5px 24px;
  border-radius: 2px 12px 2px 10px;
  background-color: #565656;
}
.add-tab svg {
  display: block;
  width: 13px;
  height: 13px;
  margin: auto;
  stroke: #c6c6c6;
  stroke-width: 3;
}

/* toolbars */
.toolbars {
  display: flex;
  flex-direction: column;
  gap: 4px;
  height: 92px;
  padding-top: 5px;
}
.toolbar-row {
  display: flex;
  gap: 1px;
  height: 39px;
}
.toolbar {
  display: flex;
  align-items: center;
  border: 1px solid #383838;
}
.toolbar:first-child {
  border-left: 0;
}
.toolbar.floating {
  margin-left: 27px;
}
.grip {
  flex: none;
  align-self: stretch;
  width: 9px;
  background: repeating-linear-gradient(#2c2c2c 0 1px, #6a6a6a 1px 2px) 3px 4px / 4px 14px no-repeat, #525252;
}
.tool {
  position: relative;
  flex: none;
  width: 39px;
  height: 38px;
}
.toolbar .tool {
  height: 36px;
}
.tool svg {
  display: block;
  width: 30px;
  height: 30px;
  margin: auto;
}
.fly::after {
  content: "";
  position: absolute;
  right: 4px;
  bottom: 3px;
  border: 2px solid #000;
  border-top-color: transparent;
  border-left-color: transparent;
}
.sep {
  width: 2px;
  height: 34px;
  margin: 0 2px;
  border-left: 1px solid #3a3a3a;
  border-right: 1px solid #9a9a9a;
}
.pale-combo {
  display: flex;
  align-items: center;
  align-self: flex-start;
  gap: 7px;
  height: 22px;
  padding: 0 6px;
  background-color: #e2e2e2;
  color: #222;
  font-size: 17px;
}
.ucs-combo { width: 172px; }
.view-combo { width: 138px; }
.globe {
  width: 18px;
  height: 18px;
  fill: #c3d0cf;
  stroke: #6a7473;
  stroke-width: 2;
}
.chev {
  width: 12px;
  height: 8px;
  fill: none;
  stroke: #555;
  stroke-width: 1;
}
.bar-close {
  align-self: flex-start;
  width: 9px;
  height: 14px;
}
.bar-close svg {
  display: block;
  width: 7px;
  height: 7px;
  stroke: #ccc;
  stroke-width: 2;
}

/* work area */
.workarea {
  display: flex;
  flex: 1;
}
.side {
  display: flex;
  align-items: flex-start;
  gap: 3px;
  width: 89px;
}
.vbar {
  display: flex;
  flex-direction: column;
  width: 41px;
  border: 1px solid #383838;
}
.vbar .grip {
  width: auto;
  height: 7px;
  background: repeating-linear-gradient(90deg, #2c2c2c 0 1px, #6a6a6a 1px 2px) 3px 2px / 14px 4px no-repeat, #525252;
}
.hsep {
  height: 2px;
  margin: 2px 2px;
  background-color: #f0f0f0;
}

.canvas {
  position: relative;
  flex: 1;
  overflow: hidden;
  background-color: #fff;
}
.viewport-label {
  padding: 0 3px;
  color: #000;
  font-size: 13px;
}
.drawing {
  position: absolute;
  left: 0;
  top: 0;
  width: 100%;
  height: 100%;
  fill: none;
}
.centerline { stroke: #f22; }
.crosshair { stroke: #111; }
.ucs-mark { stroke: #111; }

.viewcube {
  position: absolute;
  right: 13px;
  top: 0;
  width: 140px;
  text-align: center;
}
.viewcube > svg {
  display: block;
  width: 140px;
  height: 160px;
}
.ring {
  fill: none;
  stroke: #fafafa;
  stroke-width: 13;
}
.face { fill: #ededed; stroke: #999; }
.inner { fill: #e1e2e6; }
.viewcube text {
  fill: #b4b4b4;
  font: bold 19px "Noto Sans CJK SC", sans-serif;
  text-anchor: middle;
}
.viewcube .top {
  fill: #a6a6a6;
  font-size: 28px;
  font-weight: 300;
}
.wcs {
  display: inline-flex;
  align-items: center;
  gap: 6px;
  height: 17px;
  margin-top: 9px;
  padding: 0 5px;
  border-radius: 4px;
  background-color: #e8e8f3;
  color: #8c8c8c;
  font: 11px/17px "Liberation Sans", sans-serif;
}
.wcs svg {
  width: 9px;
  height: 6px;
  fill: none;
  stroke: #aaa;
}

/* command line */
.command {
  position: absolute;
  left: 403px;
  right: 405px;
  bottom: 1px;
  display: flex;
  align-items: center;
  height: 41px;
  border: 2px solid #757575;
  border-radius: 4px;
  background-color: #c7c7c7;
  color: #000;
}
.command-tools {
  display: flex;
  align-items: center;
  width: 80px;
  height: 37px;
  padding-left: 10px;
  background: linear-gradient(#888, #444);
}
.command-tools .grip {
  align-self: center;
  width: 2px;
  height: 26px;
  margin-right: 8px;
  background: repeating-linear-gradient(#ccc 0 2px, transparent 2px 5px);
}
.command-tools svg {
  display: block;
  width: 16px;
  height: 16px;
  fill: none;
  stroke: #eee;
  stroke-width: 3;
}
.command-tools button:last-child svg {
  width: 22px;
  height: 22px;
  margin-left: 14px;
  stroke-width: 0;
}
.prompt {
  width: 22px;
  height: 21px;
  margin: 0 5px 0 8px;
}
.entry {
  flex: 1;
  padding-left: 5px;
}
.entry input {
  width: 49px;
  height: 36px;
  border-right: 2px solid #000;
  font: 27px "DejaVu Sans Mono", monospace;
}

.suggest {
  position: absolute;
  left: 485px;
  bottom: 41px;
  width: 480px;
  border: 2px solid #000;
  border-top-width: 3px;
  list-style: none;
  font: 27px/33px "DejaVu Sans Mono", monospace;
}
.suggest li {
  display: flex;
  align-items: center;
  gap: 5px;
  height: 35px;
  padding: 1px 6px 0 4px;
  border-bottom: 1px solid #111;
  background-color: #767676;
  color: #fff;
}
.suggest li > svg, .blank {
  width: 25px;
  height: 25px;
}
.suggest .selected {
  border-bottom: 2px solid #2a3b66;
  background: linear-gradient(#a2bbe6, #7387a6);
}
.suggest .category {
  border-bottom: 0;
  background-color: #515151;
  color: #9b9b9b;
  font: bold 28px/33px "Open Sans", sans-serif;
}
.category > svg {
  opacity: 0.45;
}
.plus {
  margin-left: auto;
  font-size: 20px;
  font-style: normal;
}
.round {
  width: 25px;
  height: 25px;
  border: 2px solid #2a2e36;
  border-radius: 50%;
  background-color: #edf1f6;
  color: #2757c8;
  font: bold 20px/20px "Liberation Sans", sans-serif;
}
.round.web {
  border-color: #5a6463;
  background-color: #cfdcd9;
}
.selected span {
  flex: 1;
}
.round svg {
  display: block;
  width: 20px;
  height: 20px;
  fill: none;
  stroke: #56615f;
  stroke-width: 2;
}

.watermark {
  position: absolute;
  right: 100px;
  bottom: 0;
  width: 460px;
  height: 225px;
  pointer-events: none;
  fill: #fff;
  fill-opacity: 0.85;
  stroke: #d6d6d6;
  stroke-width: 3;
  filter: drop-shadow(0 0 1px #ccc);
}
.watermark text { paint-order: stroke; }
.wm-bai { font: bold 93px "Liberation Sans", sans-serif; }
.wm-du { font: bold 52px "Liberation Sans", sans-serif; }
.wm-cn { font: 900 67px "Noto Sans CJK SC", sans-serif; }
.wm-url { font: 46px "Open Sans", sans-serif; }

/* status bar */
.statusbar {
  display: flex;
  align-items: center;
  justify-content: flex-end;
  gap: 3px;
  height: 43px;
  border-top: 2px solid #5a5a5a;
  background-color: #383838;
}
.sgroup {
  display: flex;
  height: 39px;
  border: 1px solid #7b7b7b;
  background-color: #515151;
}
.sgroup button {
  display: flex;
  align-items: center;
  gap: 11px;
  padding: 0 7px;
}
.sgroup .ruled {
  border-right: 1px solid #7b7b7b;
}
.sgroup svg {
  width: 23px;
  height: 23px;
}
.sgroup .sgear {
  width: 21px;
  height: 21px;
  opacity: 0.8;
}
.sgroup .caret {
  border-width: 6px 5px 0;
}
.sgroup .model {
  padding: 0 4px;
  font-weight: bold;
  font-size: 17px;
}
.sgroup .ratio {
  gap: 6px;
  font-size: 16px;
}
.sgroup.last {
  margin-left: 6px;
  border-right: 0;
}
```
